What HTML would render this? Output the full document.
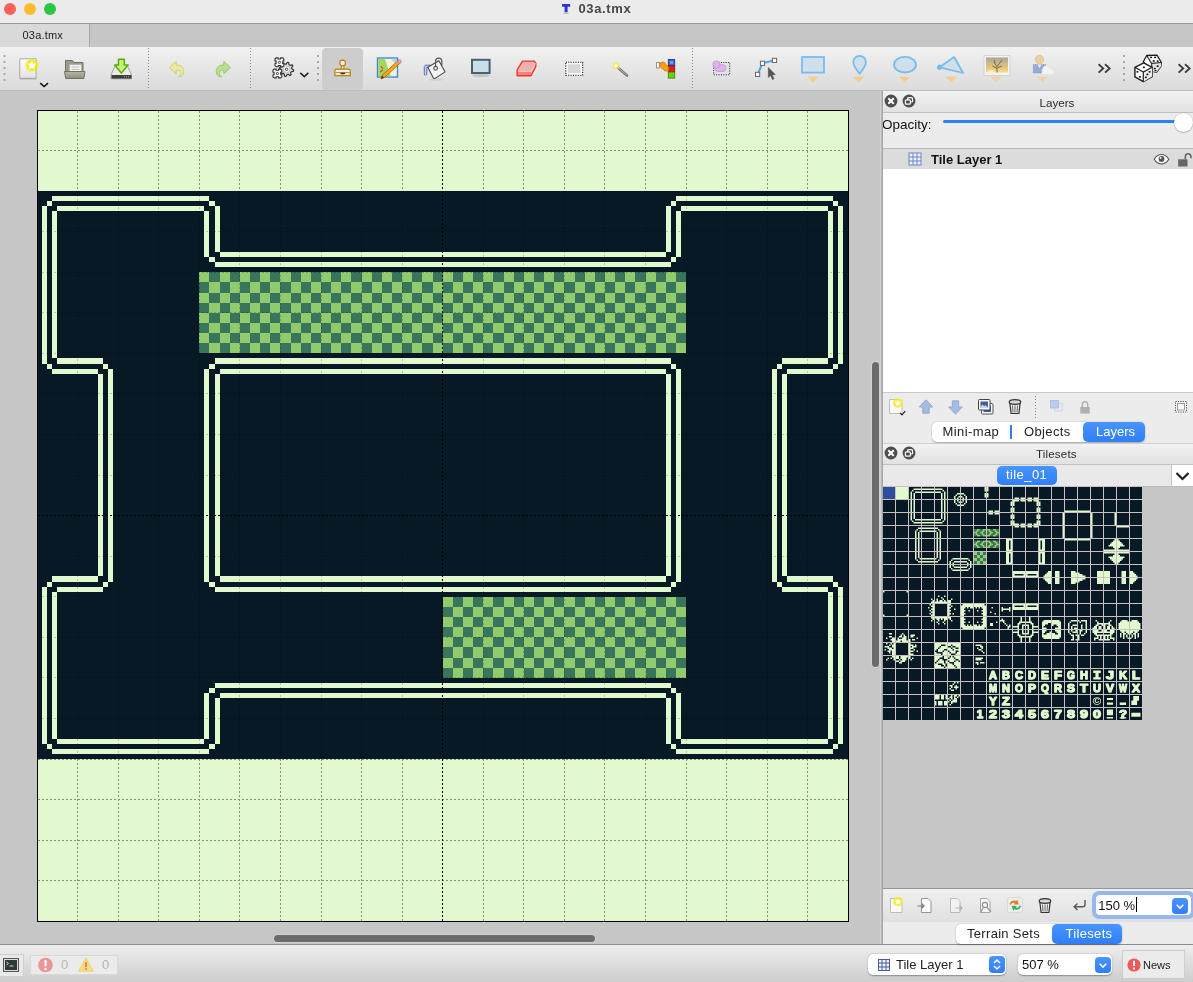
<!DOCTYPE html>
<html><head><meta charset="utf-8"><title>03a.tmx</title>
<style>
*{box-sizing:border-box;margin:0;padding:0}
html,body{width:1193px;height:982px;overflow:hidden;background:#ececec;font-family:"Liberation Sans",sans-serif;color:#1a1a1a}
.abs{position:absolute}
div.abs{white-space:nowrap}
#titlebar{left:0;top:0;width:1193px;height:23px;background:#ebebeb}
#titleline{left:0;top:23px;width:1193px;height:1px;background:#9a9a9a}
#tabbar{left:0;top:24px;width:1193px;height:23px;background:#c6c6c6}
#tab{left:0;top:24px;width:90px;height:23px;background:#d9d9d9;border-right:1px solid #a8a8a8}
#toolbar{left:0;top:47px;width:1193px;height:43px;background:linear-gradient(#f1f1f1,#dbdbdb)}
#toolline{left:0;top:90px;width:1193px;height:1px;background:#bdbdbd}
#canvas{left:0;top:91px;width:881px;height:853px;background:#c6c6c6}
#split{left:880px;top:91px;width:3px;height:853px;background:linear-gradient(90deg,#d2d2d2 0,#d2d2d2 1px,#b8b8b8 1px,#b8b8b8 2px,#a6a6a6 2px)}
#panel{left:883px;top:91px;width:310px;height:854px;background:#ececec}
#status{left:0;top:944px;width:1193px;height:38px;background:linear-gradient(#eeeeee,#cdcdcd);border-top:1px solid #8c8c8c}
#root{position:absolute;left:0;top:0;width:1193px;height:982px;will-change:transform}
.t{font-size:13px;line-height:16px}
</style></head>
<body>
<div id="root">
<div id="titlebar" class="abs" style=""></div>
<div id="titleline" class="abs" style=""></div>
<div id="tabbar" class="abs" style=""></div>
<div id="tab" class="abs" style=""></div>
<div id="toolbar" class="abs" style=""></div>
<div id="toolline" class="abs" style=""></div>
<div id="canvas" class="abs" style=""></div>
<svg class="abs" style="left:0;top:91px" width="881" height="854" viewBox="0 91 881 854" shape-rendering="crispEdges">
<g transform="translate(37.1,110.05) scale(5.07)">
<rect x="0" y="0" width="160" height="160" fill="#e2f9cf"/>
<rect x="0" y="16" width="160" height="112" fill="#061924"/>
<rect x="32" y="32" width="96" height="16" fill="#90cb6d"/>
<rect x="80" y="96" width="48" height="16" fill="#90cb6d"/>
<path fill="#39755a" d="M34 32h2v2h-2zM38 32h2v2h-2zM42 32h2v2h-2zM46 32h2v2h-2zM50 32h2v2h-2zM54 32h2v2h-2zM58 32h2v2h-2zM62 32h2v2h-2zM66 32h2v2h-2zM70 32h2v2h-2zM74 32h2v2h-2zM78 32h2v2h-2zM82 32h2v2h-2zM86 32h2v2h-2zM90 32h2v2h-2zM94 32h2v2h-2zM98 32h2v2h-2zM102 32h2v2h-2zM106 32h2v2h-2zM110 32h2v2h-2zM114 32h2v2h-2zM118 32h2v2h-2zM122 32h2v2h-2zM126 32h2v2h-2zM32 34h2v2h-2zM36 34h2v2h-2zM40 34h2v2h-2zM44 34h2v2h-2zM48 34h2v2h-2zM52 34h2v2h-2zM56 34h2v2h-2zM60 34h2v2h-2zM64 34h2v2h-2zM68 34h2v2h-2zM72 34h2v2h-2zM76 34h2v2h-2zM80 34h2v2h-2zM84 34h2v2h-2zM88 34h2v2h-2zM92 34h2v2h-2zM96 34h2v2h-2zM100 34h2v2h-2zM104 34h2v2h-2zM108 34h2v2h-2zM112 34h2v2h-2zM116 34h2v2h-2zM120 34h2v2h-2zM124 34h2v2h-2zM34 36h2v2h-2zM38 36h2v2h-2zM42 36h2v2h-2zM46 36h2v2h-2zM50 36h2v2h-2zM54 36h2v2h-2zM58 36h2v2h-2zM62 36h2v2h-2zM66 36h2v2h-2zM70 36h2v2h-2zM74 36h2v2h-2zM78 36h2v2h-2zM82 36h2v2h-2zM86 36h2v2h-2zM90 36h2v2h-2zM94 36h2v2h-2zM98 36h2v2h-2zM102 36h2v2h-2zM106 36h2v2h-2zM110 36h2v2h-2zM114 36h2v2h-2zM118 36h2v2h-2zM122 36h2v2h-2zM126 36h2v2h-2zM32 38h2v2h-2zM36 38h2v2h-2zM40 38h2v2h-2zM44 38h2v2h-2zM48 38h2v2h-2zM52 38h2v2h-2zM56 38h2v2h-2zM60 38h2v2h-2zM64 38h2v2h-2zM68 38h2v2h-2zM72 38h2v2h-2zM76 38h2v2h-2zM80 38h2v2h-2zM84 38h2v2h-2zM88 38h2v2h-2zM92 38h2v2h-2zM96 38h2v2h-2zM100 38h2v2h-2zM104 38h2v2h-2zM108 38h2v2h-2zM112 38h2v2h-2zM116 38h2v2h-2zM120 38h2v2h-2zM124 38h2v2h-2zM34 40h2v2h-2zM38 40h2v2h-2zM42 40h2v2h-2zM46 40h2v2h-2zM50 40h2v2h-2zM54 40h2v2h-2zM58 40h2v2h-2zM62 40h2v2h-2zM66 40h2v2h-2zM70 40h2v2h-2zM74 40h2v2h-2zM78 40h2v2h-2zM82 40h2v2h-2zM86 40h2v2h-2zM90 40h2v2h-2zM94 40h2v2h-2zM98 40h2v2h-2zM102 40h2v2h-2zM106 40h2v2h-2zM110 40h2v2h-2zM114 40h2v2h-2zM118 40h2v2h-2zM122 40h2v2h-2zM126 40h2v2h-2zM32 42h2v2h-2zM36 42h2v2h-2zM40 42h2v2h-2zM44 42h2v2h-2zM48 42h2v2h-2zM52 42h2v2h-2zM56 42h2v2h-2zM60 42h2v2h-2zM64 42h2v2h-2zM68 42h2v2h-2zM72 42h2v2h-2zM76 42h2v2h-2zM80 42h2v2h-2zM84 42h2v2h-2zM88 42h2v2h-2zM92 42h2v2h-2zM96 42h2v2h-2zM100 42h2v2h-2zM104 42h2v2h-2zM108 42h2v2h-2zM112 42h2v2h-2zM116 42h2v2h-2zM120 42h2v2h-2zM124 42h2v2h-2zM34 44h2v2h-2zM38 44h2v2h-2zM42 44h2v2h-2zM46 44h2v2h-2zM50 44h2v2h-2zM54 44h2v2h-2zM58 44h2v2h-2zM62 44h2v2h-2zM66 44h2v2h-2zM70 44h2v2h-2zM74 44h2v2h-2zM78 44h2v2h-2zM82 44h2v2h-2zM86 44h2v2h-2zM90 44h2v2h-2zM94 44h2v2h-2zM98 44h2v2h-2zM102 44h2v2h-2zM106 44h2v2h-2zM110 44h2v2h-2zM114 44h2v2h-2zM118 44h2v2h-2zM122 44h2v2h-2zM126 44h2v2h-2zM32 46h2v2h-2zM36 46h2v2h-2zM40 46h2v2h-2zM44 46h2v2h-2zM48 46h2v2h-2zM52 46h2v2h-2zM56 46h2v2h-2zM60 46h2v2h-2zM64 46h2v2h-2zM68 46h2v2h-2zM72 46h2v2h-2zM76 46h2v2h-2zM80 46h2v2h-2zM84 46h2v2h-2zM88 46h2v2h-2zM92 46h2v2h-2zM96 46h2v2h-2zM100 46h2v2h-2zM104 46h2v2h-2zM108 46h2v2h-2zM112 46h2v2h-2zM116 46h2v2h-2zM120 46h2v2h-2zM124 46h2v2h-2zM82 96h2v2h-2zM86 96h2v2h-2zM90 96h2v2h-2zM94 96h2v2h-2zM98 96h2v2h-2zM102 96h2v2h-2zM106 96h2v2h-2zM110 96h2v2h-2zM114 96h2v2h-2zM118 96h2v2h-2zM122 96h2v2h-2zM126 96h2v2h-2zM80 98h2v2h-2zM84 98h2v2h-2zM88 98h2v2h-2zM92 98h2v2h-2zM96 98h2v2h-2zM100 98h2v2h-2zM104 98h2v2h-2zM108 98h2v2h-2zM112 98h2v2h-2zM116 98h2v2h-2zM120 98h2v2h-2zM124 98h2v2h-2zM82 100h2v2h-2zM86 100h2v2h-2zM90 100h2v2h-2zM94 100h2v2h-2zM98 100h2v2h-2zM102 100h2v2h-2zM106 100h2v2h-2zM110 100h2v2h-2zM114 100h2v2h-2zM118 100h2v2h-2zM122 100h2v2h-2zM126 100h2v2h-2zM80 102h2v2h-2zM84 102h2v2h-2zM88 102h2v2h-2zM92 102h2v2h-2zM96 102h2v2h-2zM100 102h2v2h-2zM104 102h2v2h-2zM108 102h2v2h-2zM112 102h2v2h-2zM116 102h2v2h-2zM120 102h2v2h-2zM124 102h2v2h-2zM82 104h2v2h-2zM86 104h2v2h-2zM90 104h2v2h-2zM94 104h2v2h-2zM98 104h2v2h-2zM102 104h2v2h-2zM106 104h2v2h-2zM110 104h2v2h-2zM114 104h2v2h-2zM118 104h2v2h-2zM122 104h2v2h-2zM126 104h2v2h-2zM80 106h2v2h-2zM84 106h2v2h-2zM88 106h2v2h-2zM92 106h2v2h-2zM96 106h2v2h-2zM100 106h2v2h-2zM104 106h2v2h-2zM108 106h2v2h-2zM112 106h2v2h-2zM116 106h2v2h-2zM120 106h2v2h-2zM124 106h2v2h-2zM82 108h2v2h-2zM86 108h2v2h-2zM90 108h2v2h-2zM94 108h2v2h-2zM98 108h2v2h-2zM102 108h2v2h-2zM106 108h2v2h-2zM110 108h2v2h-2zM114 108h2v2h-2zM118 108h2v2h-2zM122 108h2v2h-2zM126 108h2v2h-2zM80 110h2v2h-2zM84 110h2v2h-2zM88 110h2v2h-2zM92 110h2v2h-2zM96 110h2v2h-2zM100 110h2v2h-2zM104 110h2v2h-2zM108 110h2v2h-2zM112 110h2v2h-2zM116 110h2v2h-2zM120 110h2v2h-2zM124 110h2v2h-2z"/>
<path fill="#e2f9cf" d="M3 17h31v1h-31zM2 18h1v1h-1zM1 19h1v31h-1zM2 50h1v1h-1zM3 51h9v1h-9zM12 52h1v40h-1zM3 92h9v1h-9zM2 93h1v1h-1zM1 94h1v31h-1zM2 125h1v1h-1zM3 126h31v1h-31zM34 125h1v1h-1zM35 116h1v9h-1zM34 18h1v1h-1zM35 19h1v9h-1zM4 19h29v1h-29zM3 20h1v29h-1zM4 49h9v1h-9zM13 50h1v1h-1zM14 51h1v42h-1zM13 93h1v1h-1zM4 94h9v1h-9zM3 95h1v29h-1zM4 124h29v1h-29zM33 115h1v9h-1zM34 114h1v1h-1zM33 20h1v9h-1zM34 29h1v1h-1zM34 50h1v1h-1zM33 51h1v42h-1zM34 93h1v1h-1zM35 52h1v40h-1zM126 17h31v1h-31zM157 18h1v1h-1zM158 19h1v31h-1zM157 50h1v1h-1zM148 51h9v1h-9zM147 52h1v40h-1zM148 92h9v1h-9zM157 93h1v1h-1zM158 94h1v31h-1zM157 125h1v1h-1zM126 126h31v1h-31zM125 125h1v1h-1zM124 116h1v9h-1zM125 18h1v1h-1zM124 19h1v9h-1zM127 19h29v1h-29zM156 20h1v29h-1zM147 49h9v1h-9zM146 50h1v1h-1zM145 51h1v42h-1zM146 93h1v1h-1zM147 94h9v1h-9zM156 95h1v29h-1zM127 124h29v1h-29zM126 115h1v9h-1zM125 114h1v1h-1zM126 20h1v9h-1zM125 29h1v1h-1zM125 50h1v1h-1zM126 51h1v42h-1zM125 93h1v1h-1zM124 52h1v40h-1zM36 28h88v1h-88zM35 30h90v1h-90zM36 115h88v1h-88zM35 113h90v1h-90zM35 49h90v1h-90zM35 94h90v1h-90zM36 51h88v1h-88zM36 92h88v1h-88z"/>
</g>
<path d="M77.5 111.0V191.0M77.5 759.0V921.5M38.0 150.5H848.5M118.5 111.0V191.0M118.5 759.0V921.5M158.5 111.0V191.0M158.5 759.0V921.5M199.5 111.0V191.0M199.5 759.0V921.5M239.5 111.0V191.0M239.5 759.0V921.5M280.5 111.0V191.0M280.5 759.0V921.5M321.5 111.0V191.0M321.5 759.0V921.5M361.5 111.0V191.0M361.5 759.0V921.5M402.5 111.0V191.0M402.5 759.0V921.5M483.5 111.0V191.0M483.5 759.0V921.5M523.5 111.0V191.0M523.5 759.0V921.5M564.5 111.0V191.0M564.5 759.0V921.5M604.5 111.0V191.0M604.5 759.0V921.5M645.5 111.0V191.0M645.5 759.0V921.5M686.5 111.0V191.0M686.5 759.0V921.5M38.0 759.5H848.5M726.5 111.0V191.0M726.5 759.0V921.5M38.0 799.5H848.5M767.5 111.0V191.0M767.5 759.0V921.5M38.0 840.5H848.5M807.5 111.0V191.0M807.5 759.0V921.5M38.0 880.5H848.5" stroke="#000" stroke-opacity="0.42" stroke-width="1" stroke-dasharray="2 2" fill="none"/>
<path d="M77.5 191.0V759.0M118.5 191.0V759.0M38.0 191.5H848.5M158.5 191.0V759.0M38.0 231.5H848.5M199.5 191.0V759.0M38.0 272.5H848.5M239.5 191.0V759.0M38.0 312.5H848.5M280.5 191.0V759.0M38.0 353.5H848.5M321.5 191.0V759.0M38.0 393.5H848.5M361.5 191.0V759.0M38.0 434.5H848.5M402.5 191.0V759.0M38.0 475.5H848.5M483.5 191.0V759.0M38.0 556.5H848.5M523.5 191.0V759.0M38.0 596.5H848.5M564.5 191.0V759.0M38.0 637.5H848.5M604.5 191.0V759.0M38.0 677.5H848.5M645.5 191.0V759.0M38.0 718.5H848.5M686.5 191.0V759.0M726.5 191.0V759.0M767.5 191.0V759.0M807.5 191.0V759.0" stroke="#000" stroke-opacity="0.2" stroke-width="1" stroke-dasharray="2 2" fill="none"/>
<path d="M442.5 111.0V921.5M38.0 515.5H848.5" stroke="#000" stroke-width="1" stroke-dasharray="2 2" fill="none"/>
<path d="M37.5 110.5H848.5V921.5H37.5Z" stroke="#000" stroke-width="1" fill="none"/>
</svg>
<div id="panel" class="abs" style=""></div>
<div id="status" class="abs" style=""></div>
<div class="abs" style="left:4px;top:3px;width:12px;height:12px;border-radius:6px;background:#fe5f57"></div>
<div class="abs" style="left:24px;top:3px;width:12px;height:12px;border-radius:6px;background:#febc2e"></div>
<div class="abs" style="left:44px;top:3px;width:12px;height:12px;border-radius:6px;background:#28c840"></div>
<div class="abs" style="left:578.5px;top:0px;font-size:13px;font-weight:bold;line-height:17px;color:#484848;letter-spacing:0.63px">03a.tmx</div>
<div class="abs" style="left:22.5px;top:28px;font-size:11px;line-height:14px;color:#1c1c1c;letter-spacing:0.2px">03a.tmx</div>
<div class="abs" style="left:872px;top:362px;width:7px;height:305px;border-radius:3.5px;background:#6b6b6b;box-shadow:0 0 0 1px rgba(255,255,255,.22)"></div>
<div class="abs" style="left:274px;top:935px;width:321px;height:7px;border-radius:3.5px;background:#6b6b6b;box-shadow:0 0 0 1px rgba(255,255,255,.22)"></div>
<div class="abs" style="left:883px;top:91px;width:310px;height:22px;background:linear-gradient(#f2f2f2,#e2e2e2);border-bottom:1px solid #c2c2c2"></div>
<div class="abs" style="left:1039.5px;top:95px;font-size:11.6px;line-height:15px;color:#2a2a2a">Layers</div>
<div class="abs" style="left:882px;top:116px;font-size:13.5px;line-height:17px;color:#111">Opacity:</div>
<div class="abs" style="left:943px;top:120px;width:236px;height:3px;border-radius:1.5px;background:#2f80f2"></div>
<div class="abs" style="left:1174px;top:113px;width:19px;height:19px;border-radius:10px;background:#fff;box-shadow:0 0 1px rgba(0,0,0,.35),0 1px 1px rgba(0,0,0,.2)"></div>
<div class="abs" style="left:883px;top:148px;width:310px;height:245px;background:#fff;border-top:1px solid #b9b9b9;border-bottom:1px solid #c8c8c8"></div>
<div class="abs" style="left:883px;top:149px;width:310px;height:20px;background:#dcdcdc"></div>
<div class="abs" style="left:931px;top:152px;font-size:13px;font-weight:bold;line-height:16px;color:#111">Tile Layer 1</div>
<div class="abs" style="left:932px;top:422px;width:213px;height:20px;border-radius:5px;background:#fff;box-shadow:0 0.5px 1.5px rgba(0,0,0,.3)"></div>
<div class="abs" style="left:1083px;top:422px;width:62px;height:20px;border-radius:5px;background:linear-gradient(#4895fd,#2f7ef8)"></div>
<div class="abs" style="left:1010px;top:425px;width:1.5px;height:14px;background:#2f7ef6"></div>
<div class="abs" style="left:942.5px;top:424px;font-size:13px;line-height:16px;color:#222;letter-spacing:0.41px">Mini-map</div>
<div class="abs" style="left:1024px;top:424px;font-size:13px;line-height:16px;color:#222;letter-spacing:0.36px">Objects</div>
<div class="abs" style="left:1096px;top:424px;font-size:13px;line-height:16px;color:#fff">Layers</div>
<div class="abs" style="left:883px;top:443px;width:310px;height:22px;background:linear-gradient(#f2f2f2,#e2e2e2);border-bottom:1px solid #c2c2c2;border-top:1px solid #cfcfcf"></div>
<div class="abs" style="left:1036px;top:446px;font-size:11.6px;line-height:15px;color:#2a2a2a;letter-spacing:0.15px">Tilesets</div>
<div class="abs" style="left:883px;top:465px;width:310px;height:22px;background:#e9e9e9;border-bottom:1px solid #bdbdbd"></div>
<div class="abs" style="left:997px;top:466px;width:60px;height:19px;border-radius:5px;background:linear-gradient(#4895fd,#2f7ef8)"></div>
<div class="abs" style="left:1006px;top:467px;font-size:13px;line-height:16px;color:#fff;letter-spacing:0.41px">tile_01</div>
<div class="abs" style="left:1171px;top:465px;width:22px;height:21px;background:#fff;border-left:1px solid #c4c4c4"></div>
<svg class="abs" style="left:1171px;top:465px" width="22" height="21"><path d="M5.5 8 L11.5 14 L17.5 8" stroke="#222" stroke-width="2.2" fill="none"/></svg>
<div class="abs" style="left:883px;top:487px;width:310px;height:401px;background:#c6c6c6"></div>
<svg class="abs" style="left:882px;top:486px" width="260" height="234" viewBox="-1 -1 260 234">
<rect x="-1" y="-1" width="261" height="235" fill="#061924"/>
<path fill="#39755a" d="M91 42h3v1.5h-3zM97 42h3v1.5h-3zM91 43.5h1.5v1.5h-1.5zM95.5 43.5h3v1.5h-3zM101.5 43.5h1.5v1.5h-1.5zM94 45h3v1.5h-3zM100 45h3v1.5h-3zM91 46.5h1.5v1.5h-1.5zM95.5 46.5h3v1.5h-3zM101.5 46.5h1.5v1.5h-1.5zM91 48h3v1.5h-3zM97 48h3v1.5h-3zM107 42h3v1.5h-3zM113 42h3v1.5h-3zM104 43.5h1.5v1.5h-1.5zM108.5 43.5h3v1.5h-3zM114.5 43.5h1.5v1.5h-1.5zM104 45h3v1.5h-3zM110 45h3v1.5h-3zM104 46.5h1.5v1.5h-1.5zM108.5 46.5h3v1.5h-3zM114.5 46.5h1.5v1.5h-1.5zM107 48h3v1.5h-3zM113 48h3v1.5h-3zM91 53.5h3v1.5h-3zM97 53.5h3v1.5h-3zM91 55h1.5v1.5h-1.5zM95.5 55h3v1.5h-3zM101.5 55h1.5v1.5h-1.5zM94 56.5h3v1.5h-3zM100 56.5h3v1.5h-3zM91 58h1.5v1.5h-1.5zM95.5 58h3v1.5h-3zM101.5 58h1.5v1.5h-1.5zM91 59.5h3v1.5h-3zM97 59.5h3v1.5h-3zM107 53.5h3v1.5h-3zM113 53.5h3v1.5h-3zM104 55h1.5v1.5h-1.5zM108.5 55h3v1.5h-3zM114.5 55h1.5v1.5h-1.5zM104 56.5h3v1.5h-3zM110 56.5h3v1.5h-3zM104 58h1.5v1.5h-1.5zM108.5 58h3v1.5h-3zM114.5 58h1.5v1.5h-1.5zM107 59.5h3v1.5h-3zM113 59.5h3v1.5h-3zM94 65h3v1.5h-3zM100 65h3v1.5h-3zM94 66.5h3v1.5h-3zM100 66.5h3v1.5h-3zM91 68h3v1.5h-3zM97 68h3v1.5h-3zM91 69.5h3v1.5h-3zM97 69.5h3v1.5h-3zM94 71h3v1.5h-3zM100 71h3v1.5h-3zM94 72.5h3v1.5h-3zM100 72.5h3v1.5h-3zM91 74h3v1.5h-3zM97 74h3v1.5h-3zM91 75.5h3v1.5h-3zM97 75.5h3v1.5h-3z"/>
<path fill="#90cb6d" d="M94 42h3v1.5h-3zM100 42h3v1.5h-3zM92.5 43.5h3v1.5h-3zM98.5 43.5h3v1.5h-3zM91 45h3v1.5h-3zM97 45h3v1.5h-3zM92.5 46.5h3v1.5h-3zM98.5 46.5h3v1.5h-3zM94 48h3v1.5h-3zM100 48h3v1.5h-3zM104 42h3v1.5h-3zM110 42h3v1.5h-3zM105.5 43.5h3v1.5h-3zM111.5 43.5h3v1.5h-3zM107 45h3v1.5h-3zM113 45h3v1.5h-3zM105.5 46.5h3v1.5h-3zM111.5 46.5h3v1.5h-3zM104 48h3v1.5h-3zM110 48h3v1.5h-3zM94 53.5h3v1.5h-3zM100 53.5h3v1.5h-3zM92.5 55h3v1.5h-3zM98.5 55h3v1.5h-3zM91 56.5h3v1.5h-3zM97 56.5h3v1.5h-3zM92.5 58h3v1.5h-3zM98.5 58h3v1.5h-3zM94 59.5h3v1.5h-3zM100 59.5h3v1.5h-3zM104 53.5h3v1.5h-3zM110 53.5h3v1.5h-3zM105.5 55h3v1.5h-3zM111.5 55h3v1.5h-3zM107 56.5h3v1.5h-3zM113 56.5h3v1.5h-3zM105.5 58h3v1.5h-3zM111.5 58h3v1.5h-3zM104 59.5h3v1.5h-3zM110 59.5h3v1.5h-3zM91 65h3v1.5h-3zM97 65h3v1.5h-3zM91 66.5h3v1.5h-3zM97 66.5h3v1.5h-3zM94 68h3v1.5h-3zM100 68h3v1.5h-3zM94 69.5h3v1.5h-3zM100 69.5h3v1.5h-3zM91 71h3v1.5h-3zM97 71h3v1.5h-3zM91 72.5h3v1.5h-3zM97 72.5h3v1.5h-3zM94 74h3v1.5h-3zM100 74h3v1.5h-3zM94 75.5h3v1.5h-3zM100 75.5h3v1.5h-3z"/>
<path fill="#e2f9cf" d="M13 0h12v1.5h-12zM13 1.5h12v1.5h-12zM13 3h12v1.5h-12zM13 4.5h12v1.5h-12zM13 6h12v1.5h-12zM13 7.5h12v1.5h-12zM13 9h12v1.5h-12zM13 10.5h12v1.5h-12zM30.5 1.5h7.5v1.5h-7.5zM29 3h1.5v1.5h-1.5zM27.5 4.5h1.5v1.5h-1.5zM32 4.5h6v1.5h-6zM27.5 6h1.5v1.5h-1.5zM30.5 6h1.5v1.5h-1.5zM27.5 7.5h1.5v1.5h-1.5zM30.5 7.5h1.5v1.5h-1.5zM27.5 9h1.5v1.5h-1.5zM30.5 9h1.5v1.5h-1.5zM27.5 10.5h1.5v1.5h-1.5zM30.5 10.5h1.5v1.5h-1.5zM39 1.5h12v1.5h-12zM39 4.5h12v1.5h-12zM52 1.5h7.5v1.5h-7.5zM59.5 3h1.5v1.5h-1.5zM52 4.5h6v1.5h-6zM61 4.5h1.5v1.5h-1.5zM58 6h1.5v1.5h-1.5zM61 6h1.5v1.5h-1.5zM58 7.5h1.5v1.5h-1.5zM61 7.5h1.5v1.5h-1.5zM58 9h1.5v1.5h-1.5zM61 9h1.5v1.5h-1.5zM58 10.5h1.5v1.5h-1.5zM61 10.5h1.5v1.5h-1.5zM74 6h3v1.5h-3zM72.5 7.5h1.5v1.5h-1.5zM71 9h1.5v1.5h-1.5zM75.5 9h1.5v1.5h-1.5zM71 10.5h1.5v1.5h-1.5zM74 10.5h1.5v1.5h-1.5zM78 6h3v1.5h-3zM81 7.5h1.5v1.5h-1.5zM78 9h1.5v1.5h-1.5zM82.5 9h1.5v1.5h-1.5zM79.5 10.5h1.5v1.5h-1.5zM82.5 10.5h1.5v1.5h-1.5zM101.5 0h1.5v1.5h-1.5zM101.5 1.5h1.5v1.5h-1.5zM101.5 3h1.5v1.5h-1.5zM101.5 6h1.5v1.5h-1.5zM101.5 7.5h1.5v1.5h-1.5zM101.5 9h1.5v1.5h-1.5zM104 0h1.5v1.5h-1.5zM104 1.5h1.5v1.5h-1.5zM104 3h1.5v1.5h-1.5zM104 6h1.5v1.5h-1.5zM104 7.5h1.5v1.5h-1.5zM104 9h1.5v1.5h-1.5zM131.5 10.5h4.5v1.5h-4.5zM137.5 10.5h4.5v1.5h-4.5zM144.5 10.5h4.5v1.5h-4.5zM150.5 10.5h4.5v1.5h-4.5zM27.5 13h1.5v1.5h-1.5zM30.5 13h1.5v1.5h-1.5zM27.5 14.5h1.5v1.5h-1.5zM30.5 14.5h1.5v1.5h-1.5zM27.5 16h1.5v1.5h-1.5zM30.5 16h1.5v1.5h-1.5zM27.5 17.5h1.5v1.5h-1.5zM30.5 17.5h1.5v1.5h-1.5zM27.5 19h1.5v1.5h-1.5zM30.5 19h1.5v1.5h-1.5zM27.5 20.5h1.5v1.5h-1.5zM30.5 20.5h1.5v1.5h-1.5zM27.5 22h1.5v1.5h-1.5zM30.5 22h1.5v1.5h-1.5zM27.5 23.5h1.5v1.5h-1.5zM30.5 23.5h1.5v1.5h-1.5zM58 13h1.5v1.5h-1.5zM61 13h1.5v1.5h-1.5zM58 14.5h1.5v1.5h-1.5zM61 14.5h1.5v1.5h-1.5zM58 16h1.5v1.5h-1.5zM61 16h1.5v1.5h-1.5zM58 17.5h1.5v1.5h-1.5zM61 17.5h1.5v1.5h-1.5zM58 19h1.5v1.5h-1.5zM61 19h1.5v1.5h-1.5zM58 20.5h1.5v1.5h-1.5zM61 20.5h1.5v1.5h-1.5zM58 22h1.5v1.5h-1.5zM61 22h1.5v1.5h-1.5zM58 23.5h1.5v1.5h-1.5zM61 23.5h1.5v1.5h-1.5zM71 13h1.5v1.5h-1.5zM74 13h1.5v1.5h-1.5zM71 14.5h1.5v1.5h-1.5zM75.5 14.5h1.5v1.5h-1.5zM72.5 16h1.5v1.5h-1.5zM74 17.5h3v1.5h-3zM79.5 13h1.5v1.5h-1.5zM82.5 13h1.5v1.5h-1.5zM78 14.5h1.5v1.5h-1.5zM82.5 14.5h1.5v1.5h-1.5zM81 16h1.5v1.5h-1.5zM78 17.5h3v1.5h-3zM105.5 23.5h4.5v1.5h-4.5zM111.5 23.5h4.5v1.5h-4.5zM127.5 14.5h1.5v1.5h-1.5zM127.5 16h1.5v1.5h-1.5zM127.5 17.5h1.5v1.5h-1.5zM127.5 20.5h1.5v1.5h-1.5zM127.5 22h1.5v1.5h-1.5zM127.5 23.5h1.5v1.5h-1.5zM130 13h6v1.5h-6zM137.5 13h4.5v1.5h-4.5zM130 14.5h1.5v1.5h-1.5zM130 16h1.5v1.5h-1.5zM130 17.5h1.5v1.5h-1.5zM130 20.5h1.5v1.5h-1.5zM130 22h1.5v1.5h-1.5zM130 23.5h1.5v1.5h-1.5zM144.5 13h4.5v1.5h-4.5zM150.5 13h4.5v1.5h-4.5zM153.5 14.5h1.5v1.5h-1.5zM153.5 16h1.5v1.5h-1.5zM153.5 17.5h1.5v1.5h-1.5zM153.5 20.5h1.5v1.5h-1.5zM153.5 22h1.5v1.5h-1.5zM153.5 23.5h1.5v1.5h-1.5zM156 14.5h1.5v1.5h-1.5zM156 16h1.5v1.5h-1.5zM156 17.5h1.5v1.5h-1.5zM156 20.5h1.5v1.5h-1.5zM156 22h1.5v1.5h-1.5zM156 23.5h1.5v1.5h-1.5zM182 23.5h12v1.5h-12zM195 23.5h12v1.5h-12zM27.5 26h1.5v1.5h-1.5zM30.5 26h1.5v1.5h-1.5zM27.5 27.5h1.5v1.5h-1.5zM30.5 27.5h1.5v1.5h-1.5zM27.5 29h1.5v1.5h-1.5zM30.5 29h1.5v1.5h-1.5zM27.5 30.5h1.5v1.5h-1.5zM30.5 30.5h1.5v1.5h-1.5zM27.5 32h1.5v1.5h-1.5zM32 32h6v1.5h-6zM29 33.5h1.5v1.5h-1.5zM30.5 35h7.5v1.5h-7.5zM39 32h12v1.5h-12zM39 35h12v1.5h-12zM58 26h1.5v1.5h-1.5zM61 26h1.5v1.5h-1.5zM58 27.5h1.5v1.5h-1.5zM61 27.5h1.5v1.5h-1.5zM58 29h1.5v1.5h-1.5zM61 29h1.5v1.5h-1.5zM58 30.5h1.5v1.5h-1.5zM61 30.5h1.5v1.5h-1.5zM52 32h6v1.5h-6zM61 32h1.5v1.5h-1.5zM59.5 33.5h1.5v1.5h-1.5zM52 35h7.5v1.5h-7.5zM105.5 26h4.5v1.5h-4.5zM111.5 26h4.5v1.5h-4.5zM127.5 27.5h1.5v1.5h-1.5zM127.5 29h1.5v1.5h-1.5zM127.5 30.5h1.5v1.5h-1.5zM127.5 33.5h1.5v1.5h-1.5zM127.5 35h1.5v1.5h-1.5zM127.5 36.5h1.5v1.5h-1.5zM130 27.5h1.5v1.5h-1.5zM130 29h1.5v1.5h-1.5zM130 30.5h1.5v1.5h-1.5zM130 33.5h1.5v1.5h-1.5zM130 35h1.5v1.5h-1.5zM130 36.5h6v1.5h-6zM137.5 36.5h4.5v1.5h-4.5zM153.5 27.5h1.5v1.5h-1.5zM153.5 29h1.5v1.5h-1.5zM153.5 30.5h1.5v1.5h-1.5zM153.5 33.5h1.5v1.5h-1.5zM153.5 35h1.5v1.5h-1.5zM144.5 36.5h4.5v1.5h-4.5zM150.5 36.5h4.5v1.5h-4.5zM156 27.5h1.5v1.5h-1.5zM156 29h1.5v1.5h-1.5zM156 30.5h1.5v1.5h-1.5zM156 33.5h1.5v1.5h-1.5zM156 35h1.5v1.5h-1.5zM156 36.5h1.5v1.5h-1.5zM179.5 26h1.5v1.5h-1.5zM179.5 27.5h1.5v1.5h-1.5zM179.5 29h1.5v1.5h-1.5zM179.5 30.5h1.5v1.5h-1.5zM179.5 32h1.5v1.5h-1.5zM179.5 33.5h1.5v1.5h-1.5zM179.5 35h1.5v1.5h-1.5zM179.5 36.5h1.5v1.5h-1.5zM208 26h1.5v1.5h-1.5zM208 27.5h1.5v1.5h-1.5zM208 29h1.5v1.5h-1.5zM208 30.5h1.5v1.5h-1.5zM208 32h1.5v1.5h-1.5zM208 33.5h1.5v1.5h-1.5zM208 35h1.5v1.5h-1.5zM208 36.5h1.5v1.5h-1.5zM231.5 26h1.5v1.5h-1.5zM231.5 27.5h1.5v1.5h-1.5zM231.5 29h1.5v1.5h-1.5zM231.5 30.5h1.5v1.5h-1.5zM231.5 32h1.5v1.5h-1.5zM231.5 33.5h1.5v1.5h-1.5zM231.5 35h1.5v1.5h-1.5zM231.5 36.5h1.5v1.5h-1.5zM35 40.5h3v1.5h-3zM33.5 42h1.5v1.5h-1.5zM32 43.5h1.5v1.5h-1.5zM36.5 43.5h1.5v1.5h-1.5zM32 45h1.5v1.5h-1.5zM35 45h1.5v1.5h-1.5zM32 46.5h1.5v1.5h-1.5zM35 46.5h1.5v1.5h-1.5zM32 48h1.5v1.5h-1.5zM35 48h1.5v1.5h-1.5zM32 49.5h1.5v1.5h-1.5zM35 49.5h1.5v1.5h-1.5zM39 40.5h12v1.5h-12zM39 43.5h12v1.5h-12zM52 40.5h3v1.5h-3zM55 42h1.5v1.5h-1.5zM52 43.5h1.5v1.5h-1.5zM56.5 43.5h1.5v1.5h-1.5zM53.5 45h1.5v1.5h-1.5zM56.5 45h1.5v1.5h-1.5zM53.5 46.5h1.5v1.5h-1.5zM56.5 46.5h1.5v1.5h-1.5zM53.5 48h1.5v1.5h-1.5zM56.5 48h1.5v1.5h-1.5zM53.5 49.5h1.5v1.5h-1.5zM56.5 49.5h1.5v1.5h-1.5zM131.5 39h4.5v1.5h-4.5zM137.5 39h4.5v1.5h-4.5zM144.5 39h4.5v1.5h-4.5zM150.5 39h4.5v1.5h-4.5zM179.5 39h1.5v1.5h-1.5zM179.5 40.5h1.5v1.5h-1.5zM179.5 42h1.5v1.5h-1.5zM179.5 43.5h1.5v1.5h-1.5zM179.5 45h1.5v1.5h-1.5zM179.5 46.5h1.5v1.5h-1.5zM179.5 48h1.5v1.5h-1.5zM179.5 49.5h1.5v1.5h-1.5zM208 39h1.5v1.5h-1.5zM208 40.5h1.5v1.5h-1.5zM208 42h1.5v1.5h-1.5zM208 43.5h1.5v1.5h-1.5zM208 45h1.5v1.5h-1.5zM208 46.5h1.5v1.5h-1.5zM208 48h1.5v1.5h-1.5zM208 49.5h1.5v1.5h-1.5zM234 39h12v1.5h-12zM32 52h1.5v1.5h-1.5zM35 52h1.5v1.5h-1.5zM32 53.5h1.5v1.5h-1.5zM35 53.5h1.5v1.5h-1.5zM32 55h1.5v1.5h-1.5zM35 55h1.5v1.5h-1.5zM32 56.5h1.5v1.5h-1.5zM35 56.5h1.5v1.5h-1.5zM32 58h1.5v1.5h-1.5zM35 58h1.5v1.5h-1.5zM32 59.5h1.5v1.5h-1.5zM35 59.5h1.5v1.5h-1.5zM32 61h1.5v1.5h-1.5zM35 61h1.5v1.5h-1.5zM32 62.5h1.5v1.5h-1.5zM35 62.5h1.5v1.5h-1.5zM53.5 52h1.5v1.5h-1.5zM56.5 52h1.5v1.5h-1.5zM53.5 53.5h1.5v1.5h-1.5zM56.5 53.5h1.5v1.5h-1.5zM53.5 55h1.5v1.5h-1.5zM56.5 55h1.5v1.5h-1.5zM53.5 56.5h1.5v1.5h-1.5zM56.5 56.5h1.5v1.5h-1.5zM53.5 58h1.5v1.5h-1.5zM56.5 58h1.5v1.5h-1.5zM53.5 59.5h1.5v1.5h-1.5zM56.5 59.5h1.5v1.5h-1.5zM53.5 61h1.5v1.5h-1.5zM56.5 61h1.5v1.5h-1.5zM53.5 62.5h1.5v1.5h-1.5zM56.5 62.5h1.5v1.5h-1.5zM123 52h6v1.5h-6zM123 53.5h3v1.5h-3zM127.5 53.5h1.5v1.5h-1.5zM123 55h3v1.5h-3zM127.5 55h1.5v1.5h-1.5zM123 56.5h3v1.5h-3zM127.5 56.5h1.5v1.5h-1.5zM123 58h3v1.5h-3zM127.5 58h1.5v1.5h-1.5zM123 59.5h3v1.5h-3zM127.5 59.5h1.5v1.5h-1.5zM123 61h3v1.5h-3zM127.5 61h1.5v1.5h-1.5zM123 62.5h6v1.5h-6zM156 52h6v1.5h-6zM156 53.5h1.5v1.5h-1.5zM159 53.5h3v1.5h-3zM156 55h1.5v1.5h-1.5zM159 55h3v1.5h-3zM156 56.5h1.5v1.5h-1.5zM159 56.5h3v1.5h-3zM156 58h1.5v1.5h-1.5zM159 58h3v1.5h-3zM156 59.5h1.5v1.5h-1.5zM159 59.5h3v1.5h-3zM156 61h1.5v1.5h-1.5zM159 61h3v1.5h-3zM156 62.5h6v1.5h-6zM182 52h12v1.5h-12zM195 52h12v1.5h-12zM231.5 52h1.5v1.5h-1.5zM230 53.5h3v1.5h-3zM228.5 55h4.5v1.5h-4.5zM227 56.5h6v1.5h-6zM225.5 58h7.5v1.5h-7.5zM230 59.5h3v1.5h-3zM231.5 61h1.5v1.5h-1.5zM221 62.5h12v1.5h-12zM234 52h1.5v1.5h-1.5zM234 53.5h3v1.5h-3zM234 55h4.5v1.5h-4.5zM234 56.5h6v1.5h-6zM234 58h7.5v1.5h-7.5zM234 59.5h3v1.5h-3zM234 61h1.5v1.5h-1.5zM234 62.5h12v1.5h-12zM32 65h1.5v1.5h-1.5zM35 65h1.5v1.5h-1.5zM32 66.5h1.5v1.5h-1.5zM35 66.5h1.5v1.5h-1.5zM32 68h1.5v1.5h-1.5zM35 68h1.5v1.5h-1.5zM32 69.5h1.5v1.5h-1.5zM35 69.5h1.5v1.5h-1.5zM32 71h1.5v1.5h-1.5zM36.5 71h1.5v1.5h-1.5zM33.5 72.5h1.5v1.5h-1.5zM35 74h3v1.5h-3zM39 71h12v1.5h-12zM39 74h12v1.5h-12zM53.5 65h1.5v1.5h-1.5zM56.5 65h1.5v1.5h-1.5zM53.5 66.5h1.5v1.5h-1.5zM56.5 66.5h1.5v1.5h-1.5zM53.5 68h1.5v1.5h-1.5zM56.5 68h1.5v1.5h-1.5zM53.5 69.5h1.5v1.5h-1.5zM56.5 69.5h1.5v1.5h-1.5zM52 71h1.5v1.5h-1.5zM56.5 71h1.5v1.5h-1.5zM55 72.5h1.5v1.5h-1.5zM52 74h3v1.5h-3zM69.5 71h7.5v1.5h-7.5zM68 72.5h1.5v1.5h-1.5zM66.5 74h1.5v1.5h-1.5zM71 74h6v1.5h-6zM66.5 75.5h1.5v1.5h-1.5zM69.5 75.5h1.5v1.5h-1.5zM78 71h7.5v1.5h-7.5zM85.5 72.5h1.5v1.5h-1.5zM78 74h6v1.5h-6zM87 74h1.5v1.5h-1.5zM84 75.5h1.5v1.5h-1.5zM87 75.5h1.5v1.5h-1.5zM123 65h6v1.5h-6zM123 66.5h3v1.5h-3zM127.5 66.5h1.5v1.5h-1.5zM123 68h3v1.5h-3zM127.5 68h1.5v1.5h-1.5zM123 69.5h3v1.5h-3zM127.5 69.5h1.5v1.5h-1.5zM123 71h3v1.5h-3zM127.5 71h1.5v1.5h-1.5zM123 72.5h3v1.5h-3zM127.5 72.5h1.5v1.5h-1.5zM123 74h3v1.5h-3zM127.5 74h1.5v1.5h-1.5zM123 75.5h6v1.5h-6zM156 65h6v1.5h-6zM156 66.5h1.5v1.5h-1.5zM159 66.5h3v1.5h-3zM156 68h1.5v1.5h-1.5zM159 68h3v1.5h-3zM156 69.5h1.5v1.5h-1.5zM159 69.5h3v1.5h-3zM156 71h1.5v1.5h-1.5zM159 71h3v1.5h-3zM156 72.5h1.5v1.5h-1.5zM159 72.5h3v1.5h-3zM156 74h1.5v1.5h-1.5zM159 74h3v1.5h-3zM156 75.5h6v1.5h-6zM221 65h12v1.5h-12zM231.5 66.5h1.5v1.5h-1.5zM230 68h3v1.5h-3zM225.5 69.5h7.5v1.5h-7.5zM227 71h6v1.5h-6zM228.5 72.5h4.5v1.5h-4.5zM230 74h3v1.5h-3zM231.5 75.5h1.5v1.5h-1.5zM234 65h12v1.5h-12zM234 66.5h1.5v1.5h-1.5zM234 68h3v1.5h-3zM234 69.5h7.5v1.5h-7.5zM234 71h6v1.5h-6zM234 72.5h4.5v1.5h-4.5zM234 74h3v1.5h-3zM234 75.5h1.5v1.5h-1.5zM66.5 78h1.5v1.5h-1.5zM69.5 78h1.5v1.5h-1.5zM66.5 79.5h1.5v1.5h-1.5zM71 79.5h6v1.5h-6zM68 81h1.5v1.5h-1.5zM69.5 82.5h7.5v1.5h-7.5zM84 78h1.5v1.5h-1.5zM87 78h1.5v1.5h-1.5zM78 79.5h6v1.5h-6zM87 79.5h1.5v1.5h-1.5zM85.5 81h1.5v1.5h-1.5zM78 82.5h7.5v1.5h-7.5zM130 84h12v1.5h-12zM130 85.5h12v1.5h-12zM130 87h1.5v1.5h-1.5zM140.5 87h1.5v1.5h-1.5zM130 88.5h12v1.5h-12zM143 84h12v1.5h-12zM143 85.5h12v1.5h-12zM143 87h1.5v1.5h-1.5zM153.5 87h1.5v1.5h-1.5zM143 88.5h12v1.5h-12zM165 84h3v1.5h-3zM163.5 85.5h4.5v1.5h-4.5zM162 87h6v1.5h-6zM160.5 88.5h7.5v1.5h-7.5zM172 84h4.5v1.5h-4.5zM172 85.5h4.5v1.5h-4.5zM172 87h4.5v1.5h-4.5zM172 88.5h4.5v1.5h-4.5zM188 84h4.5v1.5h-4.5zM188 85.5h6v1.5h-6zM188 87h6v1.5h-6zM188 88.5h6v1.5h-6zM195 85.5h1.5v1.5h-1.5zM195 87h4.5v1.5h-4.5zM195 88.5h7.5v1.5h-7.5zM214 84h6v1.5h-6zM214 85.5h6v1.5h-6zM214 87h6v1.5h-6zM214 88.5h6v1.5h-6zM221 84h6v1.5h-6zM221 85.5h6v1.5h-6zM221 87h6v1.5h-6zM221 88.5h6v1.5h-6zM238.5 84h4.5v1.5h-4.5zM238.5 85.5h4.5v1.5h-4.5zM238.5 87h4.5v1.5h-4.5zM238.5 88.5h4.5v1.5h-4.5zM247 84h3v1.5h-3zM247 85.5h4.5v1.5h-4.5zM247 87h6v1.5h-6zM247 88.5h7.5v1.5h-7.5zM160.5 91h7.5v1.5h-7.5zM162 92.5h6v1.5h-6zM163.5 94h4.5v1.5h-4.5zM165 95.5h3v1.5h-3zM172 91h4.5v1.5h-4.5zM172 92.5h4.5v1.5h-4.5zM172 94h4.5v1.5h-4.5zM172 95.5h4.5v1.5h-4.5zM188 91h6v1.5h-6zM188 92.5h6v1.5h-6zM188 94h6v1.5h-6zM188 95.5h4.5v1.5h-4.5zM195 91h7.5v1.5h-7.5zM195 92.5h4.5v1.5h-4.5zM195 94h1.5v1.5h-1.5zM214 91h6v1.5h-6zM214 92.5h6v1.5h-6zM214 94h6v1.5h-6zM214 95.5h6v1.5h-6zM221 91h6v1.5h-6zM221 92.5h6v1.5h-6zM221 94h6v1.5h-6zM221 95.5h6v1.5h-6zM238.5 91h4.5v1.5h-4.5zM238.5 92.5h4.5v1.5h-4.5zM238.5 94h4.5v1.5h-4.5zM238.5 95.5h4.5v1.5h-4.5zM247 91h7.5v1.5h-7.5zM247 92.5h6v1.5h-6zM247 94h4.5v1.5h-4.5zM247 95.5h3v1.5h-3zM0 104h1.5v1.5h-1.5zM23.5 104h1.5v1.5h-1.5zM48 111.5h1.5v1.5h-1.5zM49.5 113h1.5v1.5h-1.5zM48 114.5h3v1.5h-3zM55 108.5h1.5v1.5h-1.5zM61 108.5h1.5v1.5h-1.5zM58 110h1.5v1.5h-1.5zM53.5 111.5h1.5v1.5h-1.5zM59.5 111.5h1.5v1.5h-1.5zM53.5 113h1.5v1.5h-1.5zM56.5 113h3v1.5h-3zM61 113h1.5v1.5h-1.5zM52 114.5h12v1.5h-12zM68 111.5h1.5v1.5h-1.5zM65 113h3v1.5h-3zM65 114.5h3v1.5h-3zM0 127.5h1.5v1.5h-1.5zM23.5 127.5h1.5v1.5h-1.5zM46.5 117h1.5v1.5h-1.5zM49.5 117h1.5v1.5h-1.5zM48 118.5h3v1.5h-3zM45 120h1.5v1.5h-1.5zM49.5 120h1.5v1.5h-1.5zM48 121.5h3v1.5h-3zM46.5 123h1.5v1.5h-1.5zM49.5 123h1.5v1.5h-1.5zM48 124.5h3v1.5h-3zM46.5 126h1.5v1.5h-1.5zM49.5 126h1.5v1.5h-1.5zM48 127.5h3v1.5h-3zM65 117h3v1.5h-3zM65 118.5h1.5v1.5h-1.5zM68 118.5h1.5v1.5h-1.5zM65 120h3v1.5h-3zM65 121.5h1.5v1.5h-1.5zM71 121.5h1.5v1.5h-1.5zM65 123h3v1.5h-3zM65 124.5h1.5v1.5h-1.5zM65 126h3v1.5h-3zM69.5 126h1.5v1.5h-1.5zM65 127.5h1.5v1.5h-1.5zM79.5 117h10.5v1.5h-10.5zM78 118.5h12v1.5h-12zM78 120h4.5v1.5h-4.5zM84 120h1.5v1.5h-1.5zM87 120h3v1.5h-3zM78 121.5h3v1.5h-3zM78 123h4.5v1.5h-4.5zM85.5 123h1.5v1.5h-1.5zM78 124.5h3v1.5h-3zM78 126h4.5v1.5h-4.5zM78 127.5h3v1.5h-3zM91 117h10.5v1.5h-10.5zM91 118.5h12v1.5h-12zM92.5 120h1.5v1.5h-1.5zM95.5 120h1.5v1.5h-1.5zM98.5 120h4.5v1.5h-4.5zM100 121.5h3v1.5h-3zM94 123h1.5v1.5h-1.5zM98.5 123h4.5v1.5h-4.5zM100 124.5h3v1.5h-3zM98.5 126h4.5v1.5h-4.5zM100 127.5h3v1.5h-3zM108.5 120h1.5v1.5h-1.5zM107 124.5h1.5v1.5h-1.5zM111.5 126h1.5v1.5h-1.5zM118.5 120h1.5v1.5h-1.5zM126 120h1.5v1.5h-1.5zM118.5 121.5h9v1.5h-9zM118.5 123h1.5v1.5h-1.5zM126 123h1.5v1.5h-1.5zM130 117h12v1.5h-12zM130 118.5h1.5v1.5h-1.5zM140.5 118.5h1.5v1.5h-1.5zM130 120h12v1.5h-12zM130 121.5h12v1.5h-12zM143 117h12v1.5h-12zM143 118.5h1.5v1.5h-1.5zM153.5 118.5h1.5v1.5h-1.5zM143 120h12v1.5h-12zM143 121.5h12v1.5h-12zM48 130h3v1.5h-3zM49.5 131.5h1.5v1.5h-1.5zM48 133h1.5v1.5h-1.5zM52 130h12v1.5h-12zM53.5 131.5h3v1.5h-3zM58 131.5h1.5v1.5h-1.5zM61 131.5h3v1.5h-3zM55 133h1.5v1.5h-1.5zM61 133h1.5v1.5h-1.5zM53.5 134.5h1.5v1.5h-1.5zM59.5 134.5h1.5v1.5h-1.5zM55 136h1.5v1.5h-1.5zM61 136h1.5v1.5h-1.5zM65 130h3v1.5h-3zM66.5 131.5h1.5v1.5h-1.5zM68 133h1.5v1.5h-1.5zM78 130h3v1.5h-3zM78 131.5h4.5v1.5h-4.5zM78 133h3v1.5h-3zM78 134.5h4.5v1.5h-4.5zM85.5 134.5h1.5v1.5h-1.5zM78 136h3v1.5h-3zM78 137.5h4.5v1.5h-4.5zM84 137.5h1.5v1.5h-1.5zM87 137.5h1.5v1.5h-1.5zM78 139h12v1.5h-12zM79.5 140.5h10.5v1.5h-10.5zM100 130h3v1.5h-3zM98.5 131.5h4.5v1.5h-4.5zM100 133h3v1.5h-3zM94 134.5h1.5v1.5h-1.5zM98.5 134.5h4.5v1.5h-4.5zM100 136h3v1.5h-3zM91 137.5h3v1.5h-3zM95.5 137.5h1.5v1.5h-1.5zM98.5 137.5h4.5v1.5h-4.5zM91 139h12v1.5h-12zM91 140.5h10.5v1.5h-10.5zM113 134.5h1.5v1.5h-1.5zM107 136h3v1.5h-3zM107 137.5h3v1.5h-3zM118.5 131.5h1.5v1.5h-1.5zM117 133h4.5v1.5h-4.5zM120 134.5h1.5v1.5h-1.5zM121.5 136h1.5v1.5h-1.5zM123 137.5h1.5v1.5h-1.5zM126 137.5h1.5v1.5h-1.5zM124.5 139h3v1.5h-3zM124.5 140.5h1.5v1.5h-1.5zM137.5 130h1.5v1.5h-1.5zM137.5 131.5h1.5v1.5h-1.5zM137.5 133h1.5v1.5h-1.5zM136 134.5h6v1.5h-6zM134.5 136h3v1.5h-3zM134.5 137.5h1.5v1.5h-1.5zM139 137.5h3v1.5h-3zM130 139h6v1.5h-6zM139 139h1.5v1.5h-1.5zM134.5 140.5h1.5v1.5h-1.5zM139 140.5h1.5v1.5h-1.5zM146 130h1.5v1.5h-1.5zM146 131.5h1.5v1.5h-1.5zM146 133h1.5v1.5h-1.5zM143 134.5h6v1.5h-6zM147.5 136h3v1.5h-3zM143 137.5h3v1.5h-3zM149 137.5h1.5v1.5h-1.5zM144.5 139h1.5v1.5h-1.5zM149 139h6v1.5h-6zM144.5 140.5h1.5v1.5h-1.5zM149 140.5h1.5v1.5h-1.5zM160.5 133h7.5v1.5h-7.5zM159 134.5h9v1.5h-9zM159 136h6v1.5h-6zM159 137.5h3v1.5h-3zM159 139h1.5v1.5h-1.5zM159 140.5h4.5v1.5h-4.5zM169 133h7.5v1.5h-7.5zM169 134.5h9v1.5h-9zM169 136h9v1.5h-9zM169 137.5h1.5v1.5h-1.5zM173.5 137.5h4.5v1.5h-4.5zM175 139h3v1.5h-3zM172 140.5h6v1.5h-6zM188 133h6v1.5h-6zM186.5 134.5h1.5v1.5h-1.5zM185 136h1.5v1.5h-1.5zM185 137.5h1.5v1.5h-1.5zM189.5 137.5h4.5v1.5h-4.5zM185 139h1.5v1.5h-1.5zM188 139h1.5v1.5h-1.5zM185 140.5h1.5v1.5h-1.5zM188 140.5h1.5v1.5h-1.5zM191 140.5h3v1.5h-3zM195 133h1.5v1.5h-1.5zM198 133h6v1.5h-6zM196.5 134.5h1.5v1.5h-1.5zM202.5 134.5h1.5v1.5h-1.5zM202.5 136h1.5v1.5h-1.5zM198 137.5h1.5v1.5h-1.5zM202.5 137.5h1.5v1.5h-1.5zM198 139h1.5v1.5h-1.5zM202.5 139h1.5v1.5h-1.5zM198 140.5h1.5v1.5h-1.5zM202.5 140.5h1.5v1.5h-1.5zM212.5 133h1.5v1.5h-1.5zM214 134.5h1.5v1.5h-1.5zM214 136h6v1.5h-6zM212.5 137.5h3v1.5h-3zM218.5 137.5h1.5v1.5h-1.5zM211 139h3v1.5h-3zM215.5 139h3v1.5h-3zM209.5 140.5h4.5v1.5h-4.5zM215.5 140.5h3v1.5h-3zM227 133h1.5v1.5h-1.5zM225.5 134.5h1.5v1.5h-1.5zM221 136h6v1.5h-6zM221 137.5h1.5v1.5h-1.5zM225.5 137.5h3v1.5h-3zM221 139h1.5v1.5h-1.5zM224 139h3v1.5h-3zM228.5 139h1.5v1.5h-1.5zM221 140.5h1.5v1.5h-1.5zM224 140.5h3v1.5h-3zM228.5 140.5h3v1.5h-3zM238.5 133h6v1.5h-6zM237 134.5h9v1.5h-9zM235.5 136h10.5v1.5h-10.5zM235.5 137.5h10.5v1.5h-10.5zM235.5 139h10.5v1.5h-10.5zM235.5 140.5h10.5v1.5h-10.5zM248.5 133h6v1.5h-6zM247 134.5h9v1.5h-9zM247 136h10.5v1.5h-10.5zM247 137.5h10.5v1.5h-10.5zM247 139h10.5v1.5h-10.5zM247 140.5h10.5v1.5h-10.5zM6 146h3v1.5h-3zM6 149h3v1.5h-3zM3 150.5h1.5v1.5h-1.5zM9 150.5h3v1.5h-3zM7.5 152h4.5v1.5h-4.5zM9 153.5h3v1.5h-3zM19 146h1.5v1.5h-1.5zM17.5 147.5h1.5v1.5h-1.5zM20.5 147.5h1.5v1.5h-1.5zM16 149h3v1.5h-3zM20.5 149h3v1.5h-3zM14.5 150.5h1.5v1.5h-1.5zM19 150.5h4.5v1.5h-4.5zM14.5 152h9v1.5h-9zM13 153.5h4.5v1.5h-4.5zM19 153.5h6v1.5h-6zM27.5 147.5h4.5v1.5h-4.5zM27.5 149h3v1.5h-3zM33.5 150.5h1.5v1.5h-1.5zM26 152h1.5v1.5h-1.5zM29 152h3v1.5h-3zM26 153.5h1.5v1.5h-1.5zM134.5 143h1.5v1.5h-1.5zM139 143h1.5v1.5h-1.5zM130 144.5h6v1.5h-6zM139 144.5h1.5v1.5h-1.5zM134.5 146h1.5v1.5h-1.5zM139 146h3v1.5h-3zM134.5 147.5h3v1.5h-3zM136 149h6v1.5h-6zM137.5 150.5h1.5v1.5h-1.5zM137.5 152h1.5v1.5h-1.5zM137.5 153.5h1.5v1.5h-1.5zM144.5 143h1.5v1.5h-1.5zM149 143h1.5v1.5h-1.5zM144.5 144.5h1.5v1.5h-1.5zM149 144.5h6v1.5h-6zM143 146h3v1.5h-3zM149 146h1.5v1.5h-1.5zM147.5 147.5h3v1.5h-3zM143 149h6v1.5h-6zM146 150.5h1.5v1.5h-1.5zM146 152h1.5v1.5h-1.5zM146 153.5h1.5v1.5h-1.5zM159 143h4.5v1.5h-4.5zM159 144.5h3v1.5h-3zM166.5 144.5h1.5v1.5h-1.5zM159 146h1.5v1.5h-1.5zM163.5 146h4.5v1.5h-4.5zM159 147.5h9v1.5h-9zM159 149h9v1.5h-9zM160.5 150.5h7.5v1.5h-7.5zM172 143h6v1.5h-6zM173.5 144.5h4.5v1.5h-4.5zM169 146h3v1.5h-3zM175 146h3v1.5h-3zM169 147.5h9v1.5h-9zM169 149h9v1.5h-9zM169 150.5h7.5v1.5h-7.5zM185 143h1.5v1.5h-1.5zM188 143h1.5v1.5h-1.5zM192.5 143h1.5v1.5h-1.5zM185 144.5h1.5v1.5h-1.5zM189.5 144.5h4.5v1.5h-4.5zM186.5 146h1.5v1.5h-1.5zM188 147.5h3v1.5h-3zM192.5 147.5h1.5v1.5h-1.5zM189.5 149h1.5v1.5h-1.5zM189.5 150.5h1.5v1.5h-1.5zM188 152h3v1.5h-3zM192.5 152h1.5v1.5h-1.5zM196.5 143h3v1.5h-3zM202.5 143h1.5v1.5h-1.5zM196.5 144.5h1.5v1.5h-1.5zM202.5 144.5h1.5v1.5h-1.5zM196.5 146h1.5v1.5h-1.5zM201 146h1.5v1.5h-1.5zM195 147.5h1.5v1.5h-1.5zM198 147.5h3v1.5h-3zM195 149h1.5v1.5h-1.5zM195 150.5h1.5v1.5h-1.5zM195 152h1.5v1.5h-1.5zM209.5 143h6v1.5h-6zM218.5 143h1.5v1.5h-1.5zM209.5 144.5h10.5v1.5h-10.5zM211 146h3v1.5h-3zM212.5 147.5h7.5v1.5h-7.5zM214 149h1.5v1.5h-1.5zM217 149h1.5v1.5h-1.5zM211 150.5h4.5v1.5h-4.5zM217 150.5h1.5v1.5h-1.5zM211 152h1.5v1.5h-1.5zM215.5 152h4.5v1.5h-4.5zM221 143h3v1.5h-3zM227 143h4.5v1.5h-4.5zM221 144.5h10.5v1.5h-10.5zM227 146h3v1.5h-3zM221 147.5h7.5v1.5h-7.5zM221 149h1.5v1.5h-1.5zM224 149h1.5v1.5h-1.5zM227 149h1.5v1.5h-1.5zM221 150.5h1.5v1.5h-1.5zM224 150.5h1.5v1.5h-1.5zM227 150.5h4.5v1.5h-4.5zM221 152h6v1.5h-6zM230 152h1.5v1.5h-1.5zM237 143h9v1.5h-9zM238.5 144.5h3v1.5h-3zM243 144.5h3v1.5h-3zM237 146h1.5v1.5h-1.5zM240 146h3v1.5h-3zM244.5 146h1.5v1.5h-1.5zM237 147.5h1.5v1.5h-1.5zM240 147.5h1.5v1.5h-1.5zM243 147.5h1.5v1.5h-1.5zM237 149h1.5v1.5h-1.5zM240 149h1.5v1.5h-1.5zM243 149h1.5v1.5h-1.5zM240 150.5h1.5v1.5h-1.5zM244.5 150.5h1.5v1.5h-1.5zM247 143h9v1.5h-9zM247 144.5h3v1.5h-3zM251.5 144.5h3v1.5h-3zM247 146h1.5v1.5h-1.5zM250 146h3v1.5h-3zM254.5 146h1.5v1.5h-1.5zM248.5 147.5h1.5v1.5h-1.5zM251.5 147.5h1.5v1.5h-1.5zM254.5 147.5h1.5v1.5h-1.5zM248.5 149h1.5v1.5h-1.5zM251.5 149h1.5v1.5h-1.5zM254.5 149h1.5v1.5h-1.5zM247 150.5h1.5v1.5h-1.5zM251.5 150.5h1.5v1.5h-1.5zM3 156h1.5v1.5h-1.5zM7.5 156h1.5v1.5h-1.5zM10.5 156h1.5v1.5h-1.5zM6 157.5h1.5v1.5h-1.5zM9 157.5h3v1.5h-3zM1.5 159h4.5v1.5h-4.5zM9 159h3v1.5h-3zM4.5 160.5h4.5v1.5h-4.5zM10.5 160.5h1.5v1.5h-1.5zM1.5 162h1.5v1.5h-1.5zM6 162h6v1.5h-6zM4.5 163.5h3v1.5h-3zM9 163.5h3v1.5h-3zM6 165h1.5v1.5h-1.5zM9 165h3v1.5h-3zM9 166.5h3v1.5h-3zM26 156h1.5v1.5h-1.5zM26 157.5h4.5v1.5h-4.5zM32 157.5h1.5v1.5h-1.5zM26 159h1.5v1.5h-1.5zM29 159h4.5v1.5h-4.5zM26 160.5h4.5v1.5h-4.5zM26 162h1.5v1.5h-1.5zM30.5 162h1.5v1.5h-1.5zM26 163.5h4.5v1.5h-4.5zM33.5 163.5h1.5v1.5h-1.5zM26 165h1.5v1.5h-1.5zM26 166.5h4.5v1.5h-4.5zM52 156h12v1.5h-12zM52 157.5h6v1.5h-6zM62.5 157.5h1.5v1.5h-1.5zM52 159h4.5v1.5h-4.5zM58 159h6v1.5h-6zM52 160.5h3v1.5h-3zM56.5 160.5h7.5v1.5h-7.5zM52 162h1.5v1.5h-1.5zM55 162h6v1.5h-6zM55 163.5h4.5v1.5h-4.5zM61 163.5h3v1.5h-3zM52 165h1.5v1.5h-1.5zM59.5 165h4.5v1.5h-4.5zM52 166.5h6v1.5h-6zM59.5 166.5h4.5v1.5h-4.5zM65 156h12v1.5h-12zM65 157.5h3v1.5h-3zM69.5 157.5h7.5v1.5h-7.5zM68 159h1.5v1.5h-1.5zM72.5 159h4.5v1.5h-4.5zM65 160.5h3v1.5h-3zM69.5 160.5h3v1.5h-3zM75.5 160.5h1.5v1.5h-1.5zM65 162h4.5v1.5h-4.5zM71 162h6v1.5h-6zM66.5 163.5h6v1.5h-6zM75.5 163.5h1.5v1.5h-1.5zM65 165h1.5v1.5h-1.5zM68 165h4.5v1.5h-4.5zM74 165h3v1.5h-3zM65 166.5h3v1.5h-3zM72.5 166.5h4.5v1.5h-4.5zM92.5 157.5h6v1.5h-6zM97 159h3v1.5h-3zM94 160.5h1.5v1.5h-1.5zM98.5 160.5h1.5v1.5h-1.5zM95.5 162h3v1.5h-3zM98.5 163.5h1.5v1.5h-1.5zM100 165h1.5v1.5h-1.5zM9 169h3v1.5h-3zM4.5 170.5h1.5v1.5h-1.5zM7.5 170.5h1.5v1.5h-1.5zM10.5 170.5h1.5v1.5h-1.5zM3 172h1.5v1.5h-1.5zM10.5 172h1.5v1.5h-1.5zM13 169h3v1.5h-3zM17.5 169h7.5v1.5h-7.5zM13 170.5h3v1.5h-3zM17.5 170.5h6v1.5h-6zM16 172h1.5v1.5h-1.5zM19 172h4.5v1.5h-4.5zM13 173.5h3v1.5h-3zM17.5 173.5h4.5v1.5h-4.5zM16 175h3v1.5h-3zM26 169h1.5v1.5h-1.5zM26 170.5h1.5v1.5h-1.5zM29 170.5h1.5v1.5h-1.5zM27.5 172h1.5v1.5h-1.5zM52 169h7.5v1.5h-7.5zM61 169h3v1.5h-3zM52 170.5h4.5v1.5h-4.5zM61 170.5h3v1.5h-3zM52 172h3v1.5h-3zM56.5 172h3v1.5h-3zM52 173.5h1.5v1.5h-1.5zM55 173.5h6v1.5h-6zM62.5 173.5h1.5v1.5h-1.5zM53.5 175h7.5v1.5h-7.5zM62.5 175h1.5v1.5h-1.5zM52 176.5h3v1.5h-3zM59.5 176.5h3v1.5h-3zM52 178h6v1.5h-6zM61 178h1.5v1.5h-1.5zM52 179.5h9v1.5h-9zM62.5 179.5h1.5v1.5h-1.5zM65 169h1.5v1.5h-1.5zM68 169h1.5v1.5h-1.5zM71 169h6v1.5h-6zM66.5 170.5h4.5v1.5h-4.5zM72.5 170.5h4.5v1.5h-4.5zM65 172h7.5v1.5h-7.5zM75.5 172h1.5v1.5h-1.5zM66.5 173.5h4.5v1.5h-4.5zM72.5 173.5h3v1.5h-3zM65 175h1.5v1.5h-1.5zM71 175h6v1.5h-6zM65 176.5h4.5v1.5h-4.5zM71 176.5h6v1.5h-6zM65 178h6v1.5h-6zM72.5 178h4.5v1.5h-4.5zM65 179.5h7.5v1.5h-7.5zM74 179.5h3v1.5h-3zM92.5 170.5h7.5v1.5h-7.5zM92.5 172h6v1.5h-6zM92.5 175h3v1.5h-3zM97 175h4.5v1.5h-4.5zM94 176.5h1.5v1.5h-1.5zM71 195h1.5v1.5h-1.5zM74 195h1.5v1.5h-1.5zM69.5 196.5h1.5v1.5h-1.5zM66.5 198h3v1.5h-3zM72.5 198h1.5v1.5h-1.5zM68 199.5h1.5v1.5h-1.5zM71 199.5h4.5v1.5h-4.5zM66.5 201h1.5v1.5h-1.5zM72.5 201h1.5v1.5h-1.5zM68 202.5h3v1.5h-3zM52 208h4.5v1.5h-4.5zM58 208h3v1.5h-3zM62.5 208h1.5v1.5h-1.5zM52 209.5h4.5v1.5h-4.5zM58 209.5h3v1.5h-3zM62.5 209.5h1.5v1.5h-1.5zM52 211h4.5v1.5h-4.5zM58 211h3v1.5h-3zM62.5 211h1.5v1.5h-1.5zM52 214h1.5v1.5h-1.5zM55 214h4.5v1.5h-4.5zM61 214h3v1.5h-3zM52 215.5h1.5v1.5h-1.5zM55 215.5h4.5v1.5h-4.5zM61 215.5h3v1.5h-3zM52 217h1.5v1.5h-1.5zM55 217h4.5v1.5h-4.5zM61 217h3v1.5h-3zM68 208h1.5v1.5h-1.5zM71 208h3v1.5h-3zM75.5 208h1.5v1.5h-1.5zM66.5 209.5h3v1.5h-3zM71 209.5h1.5v1.5h-1.5zM74 209.5h1.5v1.5h-1.5zM65 211h1.5v1.5h-1.5zM68 211h1.5v1.5h-1.5zM71 211h3v1.5h-3zM66.5 212.5h1.5v1.5h-1.5zM69.5 212.5h4.5v1.5h-4.5zM65 214h1.5v1.5h-1.5zM68 214h6v1.5h-6zM68 215.5h1.5v1.5h-1.5zM66.5 217h1.5v1.5h-1.5z"/>
<rect x="0" y="0" width="12" height="12" fill="#2c4f9d"/>
<g font-family="Liberation Sans, sans-serif" font-weight="bold" font-size="11.6" fill="#e2f9cf" stroke="#e2f9cf" stroke-width="1.25" stroke-linejoin="round">
<text x="106" y="191.9" textLength="8" lengthAdjust="spacingAndGlyphs">A</text>
<text x="119" y="191.9" textLength="8" lengthAdjust="spacingAndGlyphs">B</text>
<text x="132" y="191.9" textLength="8" lengthAdjust="spacingAndGlyphs">C</text>
<text x="145" y="191.9" textLength="8" lengthAdjust="spacingAndGlyphs">D</text>
<text x="158" y="191.9" textLength="8" lengthAdjust="spacingAndGlyphs">E</text>
<text x="171" y="191.9" textLength="8" lengthAdjust="spacingAndGlyphs">F</text>
<text x="184" y="191.9" textLength="8" lengthAdjust="spacingAndGlyphs">G</text>
<text x="197" y="191.9" textLength="8" lengthAdjust="spacingAndGlyphs">H</text>
<text x="223" y="191.9" textLength="8" lengthAdjust="spacingAndGlyphs">J</text>
<text x="236" y="191.9" textLength="8" lengthAdjust="spacingAndGlyphs">K</text>
<text x="249" y="191.9" textLength="8" lengthAdjust="spacingAndGlyphs">L</text>
<text x="106" y="204.9" textLength="8" lengthAdjust="spacingAndGlyphs">M</text>
<text x="119" y="204.9" textLength="8" lengthAdjust="spacingAndGlyphs">N</text>
<text x="132" y="204.9" textLength="8" lengthAdjust="spacingAndGlyphs">O</text>
<text x="145" y="204.9" textLength="8" lengthAdjust="spacingAndGlyphs">P</text>
<text x="158" y="204.9" textLength="8" lengthAdjust="spacingAndGlyphs">Q</text>
<text x="171" y="204.9" textLength="8" lengthAdjust="spacingAndGlyphs">R</text>
<text x="184" y="204.9" textLength="8" lengthAdjust="spacingAndGlyphs">S</text>
<text x="197" y="204.9" textLength="8" lengthAdjust="spacingAndGlyphs">T</text>
<text x="210" y="204.9" textLength="8" lengthAdjust="spacingAndGlyphs">U</text>
<text x="223" y="204.9" textLength="8" lengthAdjust="spacingAndGlyphs">V</text>
<text x="236" y="204.9" textLength="8" lengthAdjust="spacingAndGlyphs">W</text>
<text x="249" y="204.9" textLength="8" lengthAdjust="spacingAndGlyphs">X</text>
<text x="106" y="217.9" textLength="8" lengthAdjust="spacingAndGlyphs">Y</text>
<text x="119" y="217.9" textLength="8" lengthAdjust="spacingAndGlyphs">Z</text>
<text x="97" y="230.9" text-anchor="middle">1</text>
<text x="106" y="230.9" textLength="8" lengthAdjust="spacingAndGlyphs">2</text>
<text x="119" y="230.9" textLength="8" lengthAdjust="spacingAndGlyphs">3</text>
<text x="132" y="230.9" textLength="8" lengthAdjust="spacingAndGlyphs">4</text>
<text x="145" y="230.9" textLength="8" lengthAdjust="spacingAndGlyphs">5</text>
<text x="158" y="230.9" textLength="8" lengthAdjust="spacingAndGlyphs">6</text>
<text x="171" y="230.9" textLength="8" lengthAdjust="spacingAndGlyphs">7</text>
<text x="184" y="230.9" textLength="8" lengthAdjust="spacingAndGlyphs">8</text>
<text x="197" y="230.9" textLength="8" lengthAdjust="spacingAndGlyphs">9</text>
<text x="210" y="230.9" textLength="8" lengthAdjust="spacingAndGlyphs">0</text>
<text x="236" y="230.9" textLength="8" lengthAdjust="spacingAndGlyphs">?</text>
</g>
<g font-family="Liberation Sans, sans-serif" font-weight="bold" font-size="11.5" fill="#e2f9cf" text-anchor="middle">
<text x="214" y="218">©</text>
</g>
<path fill="#e2f9cf" d="M224 211H230V213H224zM224 215.5H230V217.8H224zM236.7 215.6H243.1V218H236.7zM250.2 209H256V213.8H250.2zM248.3 213.4H254.1V218H248.3zM248.3 225.8H257.5V229.7H248.3zM223.9 222.4H230V228.2H223.9zM223.7 230H230V231.6H223.7zM236.7 230.2H243.2V231.6H236.7zM210.2 183.6H217.8V186H210.2zM212.4 186H215.6V190.2H212.4zM210.2 190.2H217.8V192.5H210.2z"/>
<path fill="#c9c1c1" d="M-1 -1h1v235h-1zM12 -1h1v235h-1zM25 -1h1v235h-1zM38 -1h1v235h-1zM51 -1h1v235h-1zM64 -1h1v235h-1zM77 -1h1v235h-1zM90 -1h1v235h-1zM103 -1h1v235h-1zM116 -1h1v235h-1zM129 -1h1v235h-1zM142 -1h1v235h-1zM155 -1h1v235h-1zM168 -1h1v235h-1zM181 -1h1v235h-1zM194 -1h1v235h-1zM207 -1h1v235h-1zM220 -1h1v235h-1zM233 -1h1v235h-1zM246 -1h1v235h-1zM-1 -1h261v1h-261zM-1 12h261v1h-261zM-1 25h261v1h-261zM-1 38h261v1h-261zM-1 51h261v1h-261zM-1 64h261v1h-261zM-1 77h261v1h-261zM-1 90h261v1h-261zM-1 103h261v1h-261zM-1 116h261v1h-261zM-1 129h261v1h-261zM-1 142h261v1h-261zM-1 155h261v1h-261zM-1 168h261v1h-261zM-1 181h261v1h-261zM-1 194h261v1h-261zM-1 207h261v1h-261zM-1 220h261v1h-261z"/>
</svg>
<div class="abs" style="left:883px;top:888px;width:310px;height:34px;background:linear-gradient(#f0f0f0,#e0e0e0);border-top:1px solid #969696"></div>
<div class="abs" style="left:1092px;top:891px;width:103px;height:28px;border-radius:7px;background:#96b8ee"></div>
<div class="abs" style="left:1095.5px;top:895px;width:95px;height:20px;border-radius:4px;background:#fff"></div>
<div class="abs" style="left:1172px;top:898px;width:16px;height:16px;border-radius:4px;background:linear-gradient(#4895fd,#2f7ef8)"></div>
<svg class="abs" style="left:1172px;top:898px" width="16" height="16"><path d="M4.7 6.7 L8 10 L11.3 6.7" stroke="#fff" stroke-width="1.6" fill="none"/></svg>
<div class="abs" style="left:1098.3px;top:897.6px;font-size:13px;line-height:16px;color:#111">150 %</div>
<div class="abs" style="left:1136px;top:897px;width:1px;height:15px;background:#000"></div>
<div class="abs" style="left:956px;top:924px;width:166px;height:20px;border-radius:5px;background:#fff;box-shadow:0 0.5px 1.5px rgba(0,0,0,.3)"></div>
<div class="abs" style="left:1052px;top:924px;width:70px;height:20px;border-radius:5px;background:linear-gradient(#4895fd,#2f7ef8)"></div>
<div class="abs" style="left:967px;top:926px;font-size:13px;line-height:16px;color:#222;letter-spacing:0.31px">Terrain Sets</div>
<div class="abs" style="left:1065.5px;top:926px;font-size:13px;line-height:16px;color:#fff;letter-spacing:0.33px">Tilesets</div>
<div id="split" class="abs" style=""></div>
<div class="abs" style="left:0px;top:954px;width:24px;height:23px;background:#e9e9e9;border:1px solid #cfcfcf;border-left:none"></div>
<div class="abs" style="left:30px;top:955px;width:88px;height:20px;background:#ebebeb;border:1px solid #d9d9d9"></div>
<div class="abs" style="left:61px;top:957px;font-size:13px;line-height:16px;color:#b4b4b4">0</div>
<div class="abs" style="left:102px;top:957px;font-size:13px;line-height:16px;color:#b4b4b4">0</div>
<div class="abs" style="left:868px;top:954px;width:138px;height:21px;border-radius:5px;background:#fff;box-shadow:0 0.5px 1.5px rgba(0,0,0,.35)"></div>
<div class="abs" style="left:989px;top:956px;width:16px;height:17px;border-radius:4px;background:linear-gradient(#4895fd,#2f7ef8)"></div>
<svg class="abs" style="left:989px;top:956px" width="16" height="17"><path d="M5 7 L8 4 L11 7 M5 10 L8 13 L11 10" stroke="#fff" stroke-width="1.5" fill="none"/></svg>
<div class="abs" style="left:896px;top:957px;font-size:13px;line-height:16px;color:#222">Tile Layer 1</div>
<div class="abs" style="left:1018px;top:954px;width:94px;height:21px;border-radius:5px;background:#fff;box-shadow:0 0.5px 1.5px rgba(0,0,0,.35)"></div>
<div class="abs" style="left:1095px;top:957px;width:16px;height:16px;border-radius:4px;background:linear-gradient(#4895fd,#2f7ef8)"></div>
<svg class="abs" style="left:1095px;top:957px" width="16" height="16"><path d="M4.7 6.7 L8 10 L11.3 6.7" stroke="#fff" stroke-width="1.6" fill="none"/></svg>
<div class="abs" style="left:1022px;top:957px;font-size:13px;line-height:16px;color:#111">507 %</div>
<div class="abs" style="left:1122px;top:950px;width:63px;height:29px;background:#ebebeb;border:1px solid #cdcdcd"></div>
<div class="abs" style="left:1143px;top:958px;font-size:11px;line-height:14px;color:#222">News</div>
<svg class="abs" style="left:0;top:47px" width="1193" height="44" viewBox="0 47 1193 44">
<defs><linearGradient id="gpage" x1="0" y1="0" x2="0" y2="1"><stop offset="0" stop-color="#ffffff"/><stop offset="1" stop-color="#e2e2e2"/></linearGradient><radialGradient id="gstar"><stop offset="0.6" stop-color="#f6e600"/><stop offset="1" stop-color="#f6e600" stop-opacity="0"/></radialGradient><linearGradient id="gfold" x1="0" y1="0" x2="0" y2="1"><stop offset="0" stop-color="#b9b9a8"/><stop offset="1" stop-color="#8e8f7e"/></linearGradient><linearGradient id="ggreen" x1="0" y1="0" x2="0" y2="1"><stop offset="0" stop-color="#b6ea4a"/><stop offset="1" stop-color="#5db000"/></linearGradient><linearGradient id="gsun" x1="0" y1="0" x2="0" y2="1"><stop offset="0" stop-color="#9a948a"/><stop offset="0.7" stop-color="#e8c060"/><stop offset="1" stop-color="#f4d880"/></linearGradient><radialGradient id="gwand"><stop offset="0.2" stop-color="#ffffd0"/><stop offset="0.5" stop-color="#f0e860" stop-opacity="0.8"/><stop offset="1" stop-color="#f0e860" stop-opacity="0"/></radialGradient></defs>
<rect x="322" y="48" width="41" height="42" rx="4" fill="#cdcdcd"/>
<path d="M148.5 48V90" stroke="#8c8c8c" stroke-width="1" stroke-dasharray="1 2"/>
<path d="M250.5 48V90" stroke="#8c8c8c" stroke-width="1" stroke-dasharray="1 2"/>
<path d="M692.5 48V90" stroke="#8c8c8c" stroke-width="1" stroke-dasharray="1 2"/>
<rect x="3.5" y="55" width="2" height="2" fill="#a8a8a8"/>
<rect x="3.5" y="61" width="2" height="2" fill="#a8a8a8"/>
<rect x="3.5" y="67" width="2" height="2" fill="#a8a8a8"/>
<rect x="3.5" y="73" width="2" height="2" fill="#a8a8a8"/>
<rect x="3.5" y="79" width="2" height="2" fill="#a8a8a8"/>
<rect x="317" y="55" width="2" height="2" fill="#a8a8a8"/>
<rect x="317" y="61" width="2" height="2" fill="#a8a8a8"/>
<rect x="317" y="67" width="2" height="2" fill="#a8a8a8"/>
<rect x="317" y="73" width="2" height="2" fill="#a8a8a8"/>
<rect x="317" y="79" width="2" height="2" fill="#a8a8a8"/>
<rect x="1123" y="55" width="2" height="2" fill="#a8a8a8"/>
<rect x="1123" y="61" width="2" height="2" fill="#a8a8a8"/>
<rect x="1123" y="67" width="2" height="2" fill="#a8a8a8"/>
<rect x="1123" y="73" width="2" height="2" fill="#a8a8a8"/>
<rect x="1123" y="79" width="2" height="2" fill="#a8a8a8"/>
<path d="M19.800 58.800h16.300v19.500h-16.300z" fill="url(#gpage)" stroke="#aaaaaa" stroke-width="1"/>
<path d="M20 79h16.500" stroke="#8a8a8a" stroke-width="1" opacity=".5"/>
<circle cx="31.900" cy="65.200" r="7.300" fill="url(#gstar)"/>
<path d="M31.90 60.40L33.43 63.20L36.56 63.79L34.37 66.10L34.78 69.26L31.90 67.90L29.02 69.26L29.43 66.10L27.24 63.79L30.37 63.20z" fill="#fff" stroke-linejoin="round"/>
<path d="M40.200 83.100l3.900 3.500 3.900-3.500" stroke="#111" stroke-width="1.500" fill="none"/>
<path d="M65.5 60.5h7l1.5 2h9v14h-17.5z" fill="#9b9c8b" stroke="#70715f" stroke-width="1"/>
<rect x="69.5" y="64.5" width="12" height="9" fill="#f4f4f2" stroke="#b0b0a8" stroke-width="0.8"/>
<path d="M71.5 67h8M71.5 69.5h8" stroke="#c0c0bc" stroke-width="1"/>
<path d="M64.5 71.5h20.5l-1.2 7h-18.1z" fill="url(#gfold)" stroke="#70715f" stroke-width="1"/>
<path d="M114.800 66.500h12.900l3.800 8.300v4h-20.500v-4z" fill="#ebebeb" stroke="#a2a2a2" stroke-width="1"/>
<path d="M111.500 75h20v3.600h-20z" fill="#3c403c"/>
<path d="M124 76.800h6" stroke="#aaa" stroke-width="1" stroke-dasharray="1 1"/>
<path d="M118.500 59.300h5.800v5.800h3.900l-6.800 8-6.800-8h3.900z" fill="#c8f080" stroke="#56b000" stroke-width="1.500" stroke-linejoin="round"/>
<path d="M176.2 61.3l-6.6 6.4 6.6 6v-3.6c3.2-.2 5 1.300 4.300 4.500-.2 1-.9 1.800-2 2.300 3.600-.3 5.600-2.800 5.200-6.200-.4-3.600-3.300-5.700-7.500-5.700z" fill="#ece9a0" stroke="#d2cd70" stroke-width="1"/>
<path d="M223.800 61.300l6.600 6.400-6.600 6v-3.600c-3.200-.2-5 1.300-4.300 4.500.2 1 .9 1.800 2 2.300-3.600-.3-5.600-2.800-5.200-6.200.4-3.600 3.300-5.700 7.500-5.700z" fill="#b9e08e" stroke="#92c860" stroke-width="1"/>
<path d="M293.67 70.00L293.39 71.36L291.23 71.78L290.66 72.63L291.10 74.79L289.95 75.56L288.13 74.33L287.11 74.53L285.90 76.37L284.54 76.09L284.12 73.93L283.27 73.36L281.11 73.80L280.34 72.65L281.57 70.83L281.37 69.81L279.53 68.60L279.81 67.24L281.97 66.82L282.54 65.97L282.10 63.81L283.25 63.04L285.07 64.27L286.09 64.07L287.30 62.23L288.66 62.51L289.08 64.67L289.93 65.24L292.09 64.80L292.86 65.95L291.63 67.77L291.83 68.79z" fill="#dcdedc" stroke="#333" stroke-width="1.2" stroke-linejoin="round"/>
<circle cx="286.600" cy="69.300" r="3.500" fill="#f0f1f0" stroke="#b4b6b4" stroke-width="0.800"/>
<circle cx="286.600" cy="69.300" r="1.200" fill="#fff" stroke="#333" stroke-width="0.900"/>
<path d="M276.00 57.90L278.20 57.90L278.20 59.00L280.60 59.00L280.60 57.90L282.80 57.90L283.80 58.90L283.80 61.10L282.70 61.10L282.70 63.50L283.80 63.50L283.80 65.70L282.80 66.70L280.60 66.70L280.60 65.60L278.20 65.60L278.20 66.70L276.00 66.70L275.00 65.70L275.00 63.50L276.10 63.50L276.10 61.10L275.00 61.10L275.00 58.90z" fill="#f6f6f6" stroke="#333" stroke-width="1.100" stroke-linejoin="round"/><circle cx="279.4" cy="62.3" r="1.100" fill="#fff" stroke="#333" stroke-width="0.900"/>
<path d="M274.00 69.10L276.20 69.10L276.20 70.20L278.60 70.20L278.60 69.10L280.80 69.10L281.80 70.10L281.80 72.30L280.70 72.30L280.70 74.70L281.80 74.70L281.80 76.90L280.80 77.90L278.60 77.90L278.60 76.80L276.20 76.80L276.20 77.90L274.00 77.90L273.00 76.90L273.00 74.70L274.10 74.70L274.10 72.30L273.00 72.30L273.00 70.10z" fill="#f6f6f6" stroke="#333" stroke-width="1.100" stroke-linejoin="round"/><circle cx="277.4" cy="73.5" r="1.100" fill="#fff" stroke="#333" stroke-width="0.900"/>
<path d="M300.300 72.900l4 3.700 4-3.700" stroke="#222" stroke-width="1.600" fill="none"/>
<circle cx="342.600" cy="63" r="2.900" fill="#f4ecd8" stroke="#b67e14" stroke-width="1.100"/>
<path d="M341.300 65.800h2.600v3.400h-2.600z" fill="#f4ecd8" stroke="#b67e14" stroke-width="1"/>
<path d="M336.500 69.200h12.200c.9 0 1.600.7 1.600 1.600v4.800h-15.400v-4.800c0-.9.700-1.600 1.600-1.600z" fill="#f6efdc" stroke="#b67e14" stroke-width="1.200"/>
<path d="M335.500 72.600h14.400" stroke="#b67e14" stroke-width="0.900"/>
<path d="M340 72.800h5.400l-1 1.400h-3.400z" fill="#3a2a10"/>
<rect x="377.500" y="58" width="20" height="19" fill="#f6f0d8" stroke="#3a8ad8" stroke-width="1.400"/>
<path d="M378.300 58.800h6.500l6 17.600h-12.500z" fill="#9ed860"/>
<path d="M391 58.800h5.800v7z" fill="#a8d8f0"/>
<path d="M381 66l2 3M380 72l3-2" stroke="#e04030" stroke-width="1.200"/>
<path d="M398.500 60.300l2.300 2.100-16.200 15-3.700 1.500 1.300-3.700z" fill="#f6a820" stroke="#b06a08" stroke-width="0.900"/>
<path d="M397.400 61.300l1.100-1c.8-.7 1.800-.6 2.400.1.600.7.500 1.600-.1 2.200l-1.100 1z" fill="#e8a0d8" stroke="#a868a0" stroke-width="0.700"/>
<path d="M380.900 78.900l1.200-3.200 2 1.900z" fill="#333"/>
<ellipse cx="436" cy="79.500" rx="8" ry="1.500" fill="#000" opacity=".06"/>
<path d="M424.300 66.700c0-.9.600-1.500 1.500-1.500h5l-3 2.200h-1v6.600c0 .7-.5 1.200-1.250 1.200s-1.250-.5-1.250-1.200z" fill="#c6d2f6" stroke="#5262bc" stroke-width="0.900"/>
<path d="M427.800 67.300l11.100-6.500 6.200 11.100-9.600 6.200c-.9.600-1.800.4-2.400-.5z" fill="#f3f3f3" stroke="#4a4a4a" stroke-width="1.100" stroke-linejoin="round"/>
<path d="M435.600 66.300v-5.200c0-1.800 1.300-3 3.100-3s3.100 1.200 3.100 3v4.700" fill="none" stroke="#555" stroke-width="1.200"/>
<circle cx="435.600" cy="68.300" r="1.900" fill="#e4e4e4" stroke="#555" stroke-width="1.100"/>
<ellipse cx="481" cy="75.500" rx="9" ry="1.600" fill="#000" opacity=".13"/>
<rect x="472" y="59.800" width="17.600" height="13.200" fill="#c6dfe9" stroke="#4b5f6f" stroke-width="2"/>
<path d="M522.500 61.100h11.700l1.600 2v3.400l-4.700 9.200h-14v-5.700z" fill="#eeb2ac" stroke="#f0342c" stroke-width="1.400" stroke-linejoin="round"/>
<path d="M517.900 71.800h13.400v3.100h-13.400z" fill="#f8807a"/>
<path d="M517.800 71.300h13.700l4-8" stroke="#fbd0cc" stroke-width="0.900" fill="none"/>
<rect x="566.500" y="63" width="15.500" height="11.500" fill="#d6d8d4" stroke="#fff" stroke-width="2.600"/>
<rect x="565.800" y="62.300" width="16.900" height="12.900" fill="none" stroke="#111" stroke-width="1.100" stroke-dasharray="1.200 1.200"/>
<path d="M617.500 67.200l9.500 8.300" stroke="#70756a" stroke-width="2.600" stroke-linecap="round"/>
<path d="M618 67.500l8.600 7.600" stroke="#b8bcae" stroke-width="1" stroke-linecap="round"/>
<circle cx="616" cy="65.800" r="5" fill="url(#gwand)"/>
<rect x="668.300" y="59.500" width="6.400" height="6" fill="#3a6ad0" stroke="#1e3f90" stroke-width="0.900"/>
<rect x="670" y="61.200" width="3" height="2.600" fill="#7aa0f0"/>
<rect x="668.300" y="65.800" width="6.400" height="6" fill="#e02020" stroke="#901010" stroke-width="0.900"/>
<rect x="668.300" y="72.100" width="6.400" height="6" fill="#70d010" stroke="#3a8808" stroke-width="0.900"/>
<rect x="656.500" y="62.600" width="2.800" height="5.400" fill="#fff" stroke="#888" stroke-width="0.900"/>
<path d="M659.800 62.800l4.200-.8 4.500 5.500v3.300l-3.500.2-5.200-4.600z" fill="#f8a010" stroke="#d07800" stroke-width="0.800"/>
<rect x="713.700" y="62.500" width="16" height="12.300" fill="#e2e2e2" stroke="#333" stroke-width="1" stroke-dasharray="1.100 1.300"/>
<rect x="715.200" y="64.800" width="10.600" height="6.600" rx="2.400" fill="#dcb4ea" stroke="#c494d8" stroke-width="0.800"/>
<rect x="712.800" y="61" width="7.200" height="6.800" rx="3.200" fill="#dcb4ea" stroke="#c494d8" stroke-width="0.800"/>
<path d="M757.600 74.400l4.900-11 12-3.100" stroke="#4aa6e8" stroke-width="2" fill="none"/>
<rect x="755.5" y="72.3" width="4.200" height="4.200" fill="#fff" stroke="#666" stroke-width="1"/>
<rect x="760.4" y="61.2" width="4.200" height="4.200" fill="#fff" stroke="#666" stroke-width="1"/>
<rect x="772.4" y="58.3" width="4.200" height="4.200" fill="#fff" stroke="#666" stroke-width="1"/>
<path d="M768.300 67.400v10.200l2.300-2 1.800 4 1.700-.8-1.800-3.900 3-.3z" fill="#555" stroke="#555" stroke-width="0.500"/>
<rect x="802" y="57" width="22" height="15.600" fill="#cfdfec" stroke="#78bcee" stroke-width="1.800"/>
<path d="M807.4 76.800h11.200l-5.600 5.600z" fill="#f4cb94" opacity="1"/>
<path d="M853.0 76.800h11.200l-5.600 5.600z" fill="#f4cb94" opacity="1"/>
<path d="M899.1999999999999 76.800h11.200l-5.600 5.600z" fill="#f4cb94" opacity="1"/>
<path d="M945.6 76.800h11.200l-5.600 5.600z" fill="#f4cb94" opacity="1"/>
<path d="M990.6 76.800h11.200l-5.600 5.600z" fill="#f4cb94" opacity="0.75"/>
<path d="M1037.0 76.800h11.200l-5.600 5.600z" fill="#f4cb94" opacity="0.75"/>
<path d="M859.600 73.800c-3.200-4.600-6.300-7.600-6.300-11.600 0-3.500 2.800-6.300 6.300-6.300s6.300 2.800 6.300 6.300c0 4-3.100 7-6.300 11.600z" fill="#cfdfec" stroke="#78bcee" stroke-width="1.800" stroke-linejoin="round"/>
<ellipse cx="905" cy="64.700" rx="11" ry="7.800" fill="#cfdfec" stroke="#78bcee" stroke-width="1.800"/>
<path d="M939.600 67.300l14.500-10.300 9 16z" fill="#cfdfec" stroke="#78bcee" stroke-width="1.800" stroke-linejoin="round"/>
<circle cx="939.600" cy="67.300" r="2.700" fill="#78bcee"/>
<g opacity=".8"><rect x="984" y="55.500" width="26" height="20" fill="#f6f6f6" stroke="#c8c8c8" stroke-width="0.800"/><rect x="986" y="57.500" width="22" height="15" fill="url(#gsun)"/><path d="M997 72.500v-6l-3-4M997 66.500l3.500-4.500M997 68.500l-4.500-2.500M998 67.500l4-1.500M995 63l-.5-3M1000.500 62l1.500-2" stroke="#4a4030" stroke-width="0.900" fill="none"/><ellipse cx="991" cy="72" rx="3.500" ry="2" fill="#fff6c0" opacity=".8"/></g>
<g opacity=".55"><circle cx="1039.500" cy="59.500" r="4.200" fill="#f0b860" stroke="#d89838" stroke-width="0.800"/><path d="M1033.200 64.500h12.600v8.500h-12.600z" fill="#5878c8" stroke="#3858a8" stroke-width="0.800" stroke-dasharray="1 1"/><path d="M1037.500 64.500l2 3.500 2-3.500z" fill="#fff"/><path d="M1044 66.500c2-1.500 4.500-.5 4.800 1.500 3 .2 5.200 1.800 5.200 4.200v2.300h-12v-4z" fill="#fff" stroke="#ddd" stroke-width="0.600"/></g>
<path d="M1098.6 64.200l4.600 4.200-4.600 4.200M1105.0 64.200l4.600 4.200-4.600 4.200" stroke="#3c3c3c" stroke-width="1.900" fill="none"/>
<path d="M1178.6 64.200l4.600 4.200-4.600 4.200M1185.0 64.200l4.600 4.200-4.600 4.200" stroke="#3c3c3c" stroke-width="1.900" fill="none"/>
<path d="M1146.700 55.500l10.300-.3 4.400 7.300-.4 3.800-4.400 5.800-5-.8-8.300-9.500z" fill="#fdfdfd" stroke="#1e1e1e" stroke-width="1.300" stroke-linejoin="round"/>
<path d="M1151.500 63.300l9.700-.8v3.500l-4.600 6.100-4.800-.7z" fill="#e2e2e2"/>
<path d="M1146.700 55.500l4.800 7.800 9.900-.8M1151.500 63.300l.8 7" stroke="#1e1e1e" stroke-width="1.100" fill="none"/>
<path d="M1134.900 67.300l8.800-4.400 8.500 4.400v9.300l-8.900 5.100-8.400-4.800z" fill="#fdfdfd" stroke="#1e1e1e" stroke-width="1.400" stroke-linejoin="round"/>
<path d="M1143.300 72.100l8.900-4.800v9.300l-8.900 5.100z" fill="#ececec"/>
<path d="M1134.900 67.300l8.400 4.800 8.900-4.800M1143.300 72.100v9.600" stroke="#1e1e1e" stroke-width="1.200" fill="none"/>
<ellipse cx="1143.9" cy="67.3" rx="1.100" ry="0.850" fill="#111"/>
<ellipse cx="1137.4" cy="71.8" rx="1.100" ry="0.850" fill="#111"/>
<ellipse cx="1140" cy="76.9" rx="1.100" ry="0.850" fill="#111"/>
<ellipse cx="1149.6" cy="71.8" rx="1.100" ry="0.850" fill="#111"/>
<ellipse cx="1147.4" cy="74.4" rx="1.100" ry="0.850" fill="#111"/>
<ellipse cx="1145.9" cy="77.3" rx="1.100" ry="0.850" fill="#111"/>
<ellipse cx="1151.1" cy="57.4" rx="1.100" ry="0.850" fill="#111"/>
<ellipse cx="1155.2" cy="57.4" rx="1.100" ry="0.850" fill="#111"/>
<ellipse cx="1153.7" cy="60.9" rx="1.100" ry="0.850" fill="#111"/>
<ellipse cx="1157.7" cy="61.1" rx="1.100" ry="0.850" fill="#111"/>
<ellipse cx="1157.7" cy="66.2" rx="1.100" ry="0.850" fill="#111"/>
<ellipse cx="1154.8" cy="68.5" rx="1.100" ry="0.850" fill="#111"/>
<ellipse cx="1155.5" cy="70.5" rx="1.100" ry="0.850" fill="#111"/>
</svg>
<svg class="abs" style="left:883px;top:93px" width="36" height="16" viewBox="883 93 36 16">
<circle cx="891" cy="101" r="6.400" fill="#4e4e4e"/>
<path d="M888.300 98.3l5.400 5.400M893.700 98.3l-5.400 5.400" stroke="#fff" stroke-width="2"/>
<circle cx="909" cy="101" r="6.400" fill="#4e4e4e"/>
<rect x="907.600" y="97.7" width="5" height="4.300" rx="1" fill="none" stroke="#fff" stroke-width="1.200"/>
<rect x="905.400" y="99.9" width="5" height="4.300" rx="1" fill="#4e4e4e" stroke="#fff" stroke-width="1.200"/>
</svg>
<svg class="abs" style="left:883px;top:445px" width="36" height="16" viewBox="883 445 36 16">
<circle cx="891" cy="453" r="6.400" fill="#4e4e4e"/>
<path d="M888.300 450.3l5.400 5.400M893.700 450.3l-5.400 5.400" stroke="#fff" stroke-width="2"/>
<circle cx="909" cy="453" r="6.400" fill="#4e4e4e"/>
<rect x="907.600" y="449.7" width="5" height="4.300" rx="1" fill="none" stroke="#fff" stroke-width="1.200"/>
<rect x="905.400" y="451.9" width="5" height="4.300" rx="1" fill="#4e4e4e" stroke="#fff" stroke-width="1.200"/>
</svg>
<svg class="abs" style="left:883px;top:148px" width="310" height="275" viewBox="883 148 310 275">
<rect x="909" y="153" width="12" height="12" fill="#eef2fb" stroke="#6c82c6" stroke-width="1"/>
<path d="M913 153v12M917 153v12M909 157h12M909 161h12" stroke="#6c82c6" stroke-width="1"/>
<path d="M1154.200 159.200c2-3.200 4.500-4.700 7.300-4.700s5.300 1.500 7.300 4.700c-2 3.200-4.500 4.700-7.300 4.700s-5.300-1.500-7.300-4.700z" fill="#fff" stroke="#555" stroke-width="1.200"/>
<circle cx="1161.500" cy="159" r="2.900" fill="#555"/>
<circle cx="1160.600" cy="158" r="0.900" fill="#fff"/>
<rect x="1178.200" y="159.300" width="9.300" height="7.200" fill="#666"/>
<path d="M1185.300 159.300v-2.500c0-1.800 1.200-3 2.800-3s2.800 1.200 2.800 3v1.500" fill="none" stroke="#666" stroke-width="1.600"/>
<path d="M889.500 399.500h10l2.500 2.500v11.500h-12.500z" fill="#fafafa" stroke="#bdbdbd" stroke-width="1"/>
<circle cx="897.800" cy="403" r="4.800" fill="#f7ea30" opacity=".85"/>
<path d="M897.80 400.00L898.68 401.99L900.84 402.21L899.23 403.66L899.68 405.79L897.80 404.70L895.92 405.79L896.37 403.66L894.76 402.21L896.92 401.99z" fill="#fff" stroke-linejoin="round"/>
<path d="M900 412.800l2 2 3.300-3.600" stroke="#222" stroke-width="1.200" fill="none"/>
<path d="M926 399.800l6.800 7.200h-3.600v6.200h-6.400v-6.200h-3.600z" fill="#a6bce0" stroke="#8ea6d2" stroke-width="0.900"/>
<path d="M955.500 414.200l6.800-7.200h-3.600v-6.200h-6.400v6.200h-3.600z" fill="#a6bce0" stroke="#8ea6d2" stroke-width="0.900"/>
<rect x="981.500" y="403.500" width="11.500" height="10.500" rx="1" fill="#fafafa" stroke="#555" stroke-width="1"/>
<rect x="983.500" y="405.500" width="7.500" height="6.500" fill="#3f5c9c"/>
<rect x="978.500" y="399.500" width="11.500" height="10.500" rx="1" fill="#fafafa" stroke="#444" stroke-width="1"/>
<rect x="980.500" y="401.500" width="7.500" height="6.500" fill="#3f5c9c"/>
<path d="M980.500 407l2-2.400 1.700 1.600 1.300-1.200 2.500 2.500v.5h-7.500z" fill="#c8d6f0"/>
<path d="M1009.800 402.500h10.400l-1.300 11h-7.800z" fill="#f0f0f0" stroke="#333" stroke-width="1.200"/>
<ellipse cx="1015" cy="402" rx="5.800" ry="2.300" fill="#d8d8d8" stroke="#333" stroke-width="1.200"/>
<path d="M1012.500 405.500l.5 7M1015 405.500v7M1017.500 405.500l-.5 7" stroke="#555" stroke-width="0.900"/>
<path d="M1035.500 396V418" stroke="#8c8c8c" stroke-width="1" stroke-dasharray="1 2"/>
<rect x="1054.500" y="403.500" width="8" height="7.500" fill="#e4e8f4" stroke="#ccd2e4" stroke-width="0.800"/>
<rect x="1050.500" y="400.500" width="8" height="7.500" fill="#bccbea" stroke="#aabbe0" stroke-width="0.800"/>
<rect x="1080.300" y="407" width="9.400" height="6.600" fill="#b0b0b0"/>
<path d="M1082.300 407v-2.400c0-1.700 1.200-2.800 2.700-2.800s2.700 1.100 2.700 2.800v2.400" fill="none" stroke="#b0b0b0" stroke-width="1.500"/>
<rect x="1175.500" y="401.500" width="11" height="10.500" fill="#f4f4f4" stroke="#555" stroke-width="1" stroke-dasharray="1.200 1.200"/>
<rect x="1177.500" y="403.500" width="7" height="6.500" fill="#fff" stroke="#888" stroke-width="0.800"/>
</svg>
<svg class="abs" style="left:883px;top:889px" width="210" height="33" viewBox="883 889 210 33">
<path d="M890.500 898.500h9l2.500 2.500v11.500h-11.500z" fill="#fafafa" stroke="#bdbdbd" stroke-width="1"/>
<circle cx="898" cy="901.500" r="4.800" fill="#f7ea30" opacity=".85"/>
<path d="M898.00 898.50L898.88 900.49L901.04 900.71L899.43 902.16L899.88 904.29L898.00 903.20L896.12 904.29L896.57 902.16L894.96 900.71L897.12 900.49z" fill="#fff" stroke-linejoin="round"/>
<path d="M921.5 898.500h6.500l3 3v11h-9.500z" fill="#fbfbfb" stroke="#8a8a8a" stroke-width="0.900" opacity="1"/>
<path d="M917.500 906h6.500m-2.500-2.500l2.500 2.500-2.500 2.500" stroke="#7a7a7a" stroke-width="1.100" fill="none"/>
<path d="M950.5 898.500h6.500l3 3v11h-9.500z" fill="#fbfbfb" stroke="#8a8a8a" stroke-width="0.900" opacity="0.55"/>
<path d="M955.500 908h6.500m-2.500-2.500l2.500 2.500-2.500 2.500" stroke="#b0b0b0" stroke-width="1.100" fill="none"/>
<path d="M980.5 898.500h6.500l3 3v11h-9.500z" fill="#fbfbfb" stroke="#8a8a8a" stroke-width="0.900" opacity="0.8"/>
<circle cx="985" cy="905" r="2.600" fill="none" stroke="#8a8a8a" stroke-width="1.100"/><path d="M983.300 907.500l-2.800 5M986.800 907.200l4.400 4.600" stroke="#9a9a9a" stroke-width="1.300" fill="none"/>
<rect x="1007.500" y="897.500" width="15" height="15" rx="2" fill="#ececec" stroke="#d4d4d4" stroke-width="0.800"/>
<path d="M1009.500 904.500c.5-3.200 3.800-5 6.800-3.500l1-1.600 1.600 5.200-5.200-.2 1-1.500c-1.800-.7-3.300.1-3.800 1.800z" fill="#e08020"/>
<path d="M1021 905.800c-.5 3.200-3.800 5-6.800 3.500l-1 1.600-1.600-5.200 5.200.2-1 1.500c1.800.7 3.300-.1 3.800-1.800z" fill="#30b860"/>
<path d="M1039.800 901.500h10.400l-1.300 11h-7.800z" fill="#f0f0f0" stroke="#333" stroke-width="1.200"/>
<ellipse cx="1045" cy="901" rx="5.800" ry="2.300" fill="#d8d8d8" stroke="#333" stroke-width="1.200"/>
<path d="M1042.500 904.500l.5 7M1045 904.500v7M1047.500 904.500l-.5 7" stroke="#555" stroke-width="0.900"/>
<path d="M1085 900v4.500c0 1.400-.8 2.200-2.200 2.200h-8.500m3.200-3.200l-3.400 3.200 3.400 3.200" stroke="#555" stroke-width="1.400" fill="none"/>
</svg>
<svg class="abs" style="left:0;top:946px" width="1193" height="36" viewBox="0 946 1193 36">
<rect x="3.500" y="958.500" width="15" height="13" fill="#dcdcdc" stroke="#555" stroke-width="1"/>
<rect x="5" y="960" width="12" height="10" fill="#2e3a34"/>
<path d="M6.500 962l2 1.500-2 1.500M9.500 966h4" stroke="#e8e8e8" stroke-width="0.900" fill="none"/>
<circle cx="45.500" cy="965" r="7.300" fill="#eb9696"/>
<path d="M45.500 960.200v6" stroke="#fff" stroke-width="2.200"/><circle cx="45.500" cy="969" r="1.200" fill="#fff"/>
<path d="M86 957.800l7.300 13.400h-14.600z" fill="#f6dc84" stroke="#f0d060" stroke-width="0.800" stroke-linejoin="round"/>
<path d="M86 962v5" stroke="#e07038" stroke-width="1.600"/><circle cx="86" cy="969" r="0.900" fill="#e07038"/>
<rect x="878.500" y="959.500" width="11" height="11" fill="#eef2fb" stroke="#4a5a9a" stroke-width="1"/>
<path d="M882 959.500v11M886 959.500v11M878.500 963h11M878.500 967h11" stroke="#4a5a9a" stroke-width="1"/>
<circle cx="1134" cy="965" r="6.600" fill="#ee5a5a"/>
<path d="M1134 960.800v5.200" stroke="#fff" stroke-width="2"/><circle cx="1134" cy="968.600" r="1.100" fill="#fff"/>
</svg>
<svg class="abs" style="left:561px;top:3px" width="10" height="12" viewBox="0 0 10 12"><path d="M1 1h8.200v2.800h-2.600v5.400h-3v-5.400h-2.600z" fill="#2c36d6"/><path d="M2.500 10.300h5" stroke="#9a9ab0" stroke-width="0.800"/></svg>
</div>
</body></html>
